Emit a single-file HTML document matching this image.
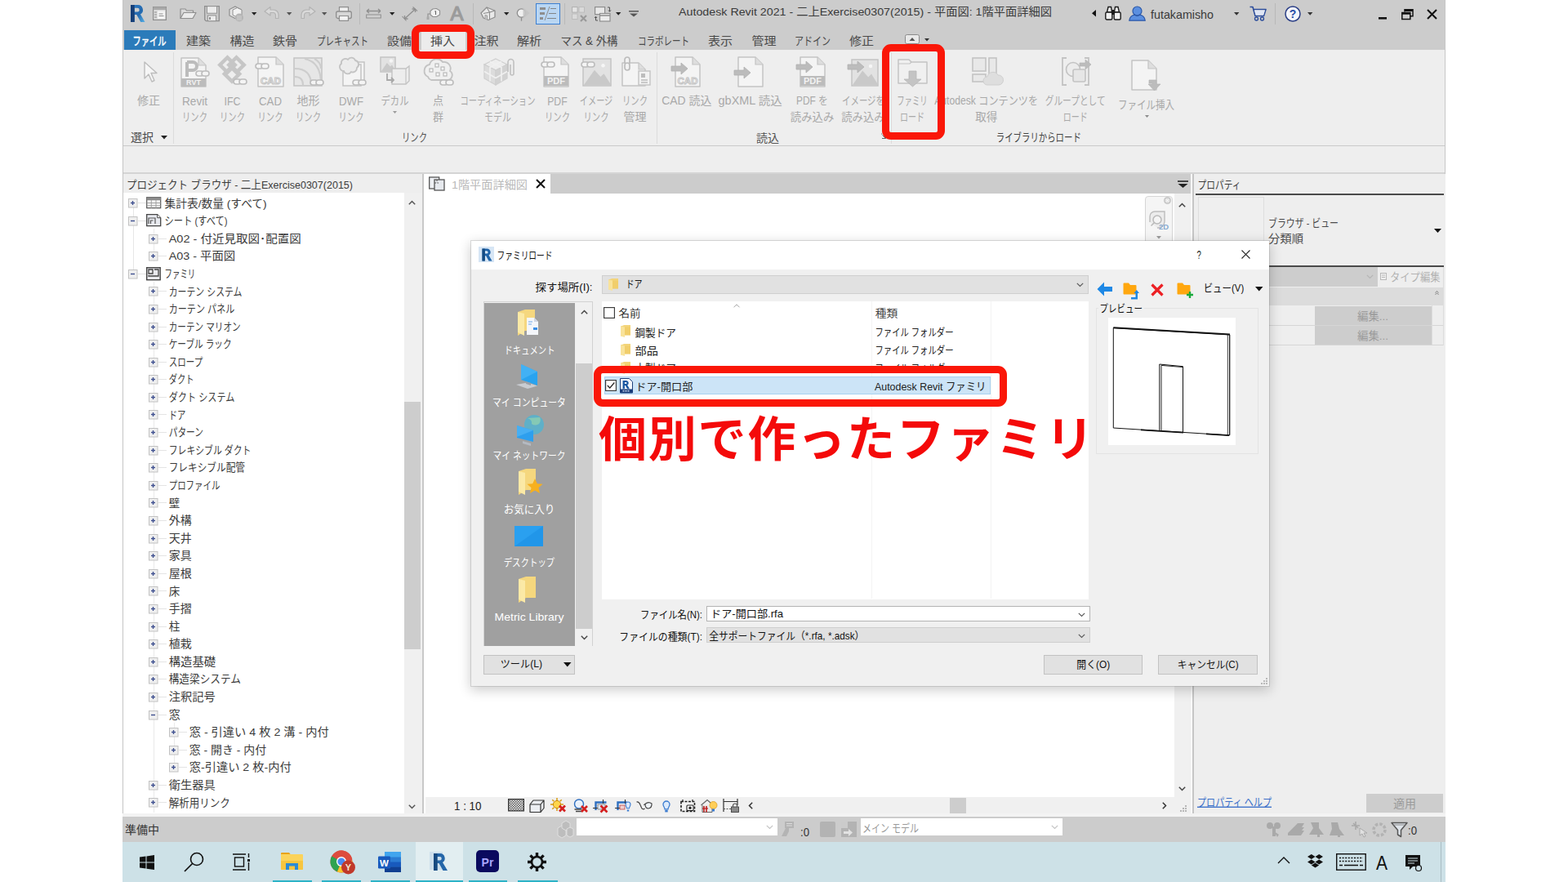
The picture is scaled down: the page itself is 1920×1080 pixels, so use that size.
<!DOCTYPE html>
<html lang="ja"><head><meta charset="utf-8"><title>Autodesk Revit 2021</title>
<style>
html,body{margin:0;padding:0;width:1920px;height:1080px;overflow:hidden;background:#fff;}
body{font-family:"Liberation Sans","Noto Sans CJK JP",sans-serif;font-size:14px;color:#333;position:relative;}
.a{position:absolute;}
.t{position:absolute;white-space:nowrap;line-height:1;will-change:transform;}
.h{position:absolute;white-space:nowrap;line-height:1;color:transparent;overflow:hidden;}
svg{position:absolute;overflow:visible;}
</style></head>
<body>
<div class="a" style="left:150px;top:0px;width:1620px;height:61px;background:#cccccc;"></div>
<div class="a" style="left:150px;top:61px;width:1620px;height:117px;background:#eeeeee;"></div>
<div class="a" style="left:150px;top:178px;width:1620px;height:1px;background:#c9c9c9;"></div>
<div class="a" style="left:150px;top:179px;width:1620px;height:32px;background:#eeeeee;"></div>
<div class="a" style="left:150px;top:211px;width:1620px;height:2px;background:#d4d4d4;"></div>
<div class="a" style="left:150px;top:213px;width:1620px;height:787px;background:#eeeeee;"></div>
<div class="a" style="left:150px;top:0px;width:1px;height:1000px;background:#c4c4c4;"></div>
<div class="a" style="left:1769px;top:0px;width:1px;height:1000px;background:#c6c6c6;"></div>
<svg style="left:0;top:0" width="1" height="1"><text x="831" y="19.1" font-size="13.6" fill="#3a3a3a" textLength="457" lengthAdjust="spacingAndGlyphs">Autodesk Revit 2021 - 二上Exercise0307(2015) - 平面図: 1階平面詳細図</text></svg>
<svg style="left:0;top:0" width="1" height="1"><text x="1409" y="23.4" font-size="14.5" fill="#3a3a3a" textLength="77" lengthAdjust="spacingAndGlyphs">futakamisho</text></svg>
<div class="a" style="left:152px;top:37px;width:63px;height:24px;background:#2b7bba;"></div>
<svg style="left:0;top:0" width="1" height="1"><text x="162.5" y="55.2" font-size="14.1" fill="#ffffff" stroke="#ffffff" stroke-width="0.5" textLength="41" lengthAdjust="spacingAndGlyphs">ファイル</text></svg>
<div class="a" style="left:516px;top:38px;width:54px;height:23px;background:#ececec;"></div>
<svg style="left:0;top:0" width="1" height="1"><text x="228" y="55.3" font-size="14.1" fill="#4a4a4a" textLength="30" lengthAdjust="spacingAndGlyphs">建築</text></svg>
<svg style="left:0;top:0" width="1" height="1"><text x="281.5" y="55.3" font-size="14.1" fill="#4a4a4a" textLength="30" lengthAdjust="spacingAndGlyphs">構造</text></svg>
<svg style="left:0;top:0" width="1" height="1"><text x="334" y="55.3" font-size="14.1" fill="#4a4a4a" textLength="30" lengthAdjust="spacingAndGlyphs">鉄骨</text></svg>
<svg style="left:0;top:0" width="1" height="1"><text x="388" y="55.3" font-size="14.1" fill="#4a4a4a" textLength="63" lengthAdjust="spacingAndGlyphs">プレキャスト</text></svg>
<svg style="left:0;top:0" width="1" height="1"><text x="474" y="55.3" font-size="14.1" fill="#4a4a4a" textLength="30" lengthAdjust="spacingAndGlyphs">設備</text></svg>
<svg style="left:0;top:0" width="1" height="1"><text x="527" y="55.3" font-size="14.1" fill="#4a4a4a" textLength="30" lengthAdjust="spacingAndGlyphs">挿入</text></svg>
<svg style="left:0;top:0" width="1" height="1"><text x="580.5" y="55.3" font-size="14.1" fill="#4a4a4a" textLength="30" lengthAdjust="spacingAndGlyphs">注釈</text></svg>
<svg style="left:0;top:0" width="1" height="1"><text x="633" y="55.3" font-size="14.1" fill="#4a4a4a" textLength="30" lengthAdjust="spacingAndGlyphs">解析</text></svg>
<svg style="left:0;top:0" width="1" height="1"><text x="686.5" y="55.3" font-size="14.1" fill="#4a4a4a" textLength="70" lengthAdjust="spacingAndGlyphs">マス &amp; 外構</text></svg>
<svg style="left:0;top:0" width="1" height="1"><text x="781" y="55.3" font-size="14.1" fill="#4a4a4a" textLength="63" lengthAdjust="spacingAndGlyphs">コラボレート</text></svg>
<svg style="left:0;top:0" width="1" height="1"><text x="867" y="55.3" font-size="14.1" fill="#4a4a4a" textLength="30" lengthAdjust="spacingAndGlyphs">表示</text></svg>
<svg style="left:0;top:0" width="1" height="1"><text x="920.5" y="55.3" font-size="14.1" fill="#4a4a4a" textLength="30" lengthAdjust="spacingAndGlyphs">管理</text></svg>
<svg style="left:0;top:0" width="1" height="1"><text x="973" y="55.3" font-size="14.1" fill="#4a4a4a" textLength="44" lengthAdjust="spacingAndGlyphs">アドイン</text></svg>
<svg style="left:0;top:0" width="1" height="1"><text x="1040" y="55.3" font-size="14.1" fill="#4a4a4a" textLength="30" lengthAdjust="spacingAndGlyphs">修正</text></svg>
<svg style="left:158px;top:5px;" width="20" height="22" viewBox="0 0 20 22"><defs><linearGradient id="rg" x1="0" y1="0" x2="1" y2="1"><stop offset="0" stop-color="#2d7cc7"/><stop offset="0.550" stop-color="#2468ad"/><stop offset="1" stop-color="#56b0e6"/></linearGradient></defs><path d="M2 1 h9 a6.200 6.200 0 0 1 3 11.500 l5.500 9.500 h-5.200 l-5 -9 h-2.600 v9 h-4.700z M6.700 4.800 v4.800 h3.600 a2.400 2.400 0 0 0 0 -4.800z" fill="url(#rg)" fill-rule="evenodd"/><path d="M2 1 h4.700 v21 h-4.700z" fill="#163f78"/></svg>
<svg style="left:187px;top:8px;" width="17" height="17" viewBox="0 0 17 17"><rect x="0.600" y="0.600" width="15.800" height="15.800" fill="#dcdcdc" stroke="#8e8e8e" stroke-width="1.200"/><rect x="0.600" y="0.600" width="15.800" height="3.400" fill="#a9a9a9"/><rect x="6" y="5.500" width="9" height="9.500" fill="#f4f4f4"/><path d="M2 7 h3 M2 10 h3 M2 13 h3 M7.500 9 h5 M7.500 11.500 h6" stroke="#8e8e8e" stroke-width="1.100"/></svg>
<svg style="left:220px;top:9px;" width="21" height="15" viewBox="0 0 21 15"><path d="M1 13.500 v-11.500 h6 l1.500 2 h8 v2.500" fill="#dadada" stroke="#8e8e8e" stroke-width="1.200" stroke-linejoin="round"/><path d="M1 13.500 l4 -7 h15 l-4 7z" fill="#ebebeb" stroke="#8e8e8e" stroke-width="1.200" stroke-linejoin="round"/></svg>
<svg style="left:250px;top:6.5px;" width="19" height="19.5" viewBox="0 0 19 19.5"><path d="M0.700 0.700 h17.600 v18 h-16 l-1.600 -1.600z" fill="#c9c9c9" stroke="#8e8e8e" stroke-width="1.300"/><rect x="3.500" y="0.700" width="12" height="8.500" fill="#ececec" stroke="#8e8e8e" stroke-width="0.900"/><rect x="4.500" y="12" width="10" height="6.700" fill="#ececec" stroke="#8e8e8e" stroke-width="0.900"/><rect x="6" y="14" width="2" height="3" fill="#8e8e8e"/></svg>
<svg style="left:279px;top:6.5px;" width="20" height="20" viewBox="0 0 20 20"><path d="M9 1 l7 3.500 v7.500 l-7 3.500 l-7 -3.500 v-7.500z" fill="#e6e6e6" stroke="#8e8e8e" stroke-width="1.200"/><path d="M6 5 l5.500 -2.500 l5.500 2.500 v6.500 l-5.500 2.500 l-5.500 -2.500z" fill="#f2f2f2" stroke="#8e8e8e" stroke-width="1"/><circle cx="14" cy="14.500" r="5" fill="#b5b5b5"/><path d="M11 13 h6 M11 15 h6 M11 17 h6" stroke="#d8d8d8" stroke-width="0.800"/></svg>
<svg style="left:307.6px;top:15px;" width="6.4" height="3.8" viewBox="0 0 6.4 3.8"><path d="M0 0 h6.400 l-3.200 3.800z" fill="#222"/></svg>
<svg style="left:323px;top:8px;" width="19" height="15" viewBox="0 0 19 15"><path d="M1 6 l7 -5.500 v3.500 h4 a6 6 0 0 1 6 6 v4.500 h-3.500 v-4 a3 3 0 0 0 -3 -3 h-3.500 v3.500z" fill="#d9d9d9" stroke="#b3b3b3" stroke-width="1.200" stroke-linejoin="round"/></svg>
<svg style="left:350.8px;top:15px;" width="6.4" height="3.8" viewBox="0 0 6.4 3.8"><path d="M0 0 h6.400 l-3.200 3.800z" fill="#555"/></svg>
<svg style="left:367.5px;top:8px;" width="19" height="15" viewBox="0 0 19 15"><path d="M18 6 l-7 -5.500 v3.500 h-4 a6 6 0 0 0 -6 6 v4.500 h3.500 v-4 a3 3 0 0 1 3 -3 h3.500 v3.500z" fill="#d9d9d9" stroke="#b3b3b3" stroke-width="1.200" stroke-linejoin="round"/></svg>
<svg style="left:394.3px;top:15px;" width="6.4" height="3.8" viewBox="0 0 6.4 3.8"><path d="M0 0 h6.400 l-3.200 3.800z" fill="#555"/></svg>
<svg style="left:410.5px;top:8px;" width="20" height="18" viewBox="0 0 20 18"><path d="M4.500 6 v-5.300 h11 v5.300" fill="#efefef" stroke="#8e8e8e" stroke-width="1.200"/><rect x="0.700" y="6" width="18.600" height="8.500" rx="2" fill="#d6d6d6" stroke="#8e8e8e" stroke-width="1.300"/><path d="M4.500 11.500 h11 v5.800 h-11z" fill="#f2f2f2" stroke="#8e8e8e" stroke-width="1.200"/></svg>
<div class="a" style="left:439.5px;top:4px;width:1px;height:26px;background:#b9b9b9;"></div>
<svg style="left:447.5px;top:10px;" width="19" height="13" viewBox="0 0 19 13"><path d="M1 3.500 h17 M1 3.500 l3 -2.500 M1 3.500 l3 2.500 M18 3.500 l-3 -2.500 M18 3.500 l-3 2.500" fill="none" stroke="#8e8e8e" stroke-width="1.300"/><rect x="0.700" y="8" width="17.600" height="4" fill="#cfcfcf" stroke="#8e8e8e" stroke-width="1"/></svg>
<svg style="left:476.5px;top:15px;" width="6.4" height="3.8" viewBox="0 0 6.4 3.8"><path d="M0 0 h6.400 l-3.200 3.800z" fill="#222"/></svg>
<svg style="left:491.5px;top:7.5px;" width="20" height="18" viewBox="0 0 20 18"><path d="M3.500 15 l13 -12 M3.500 15 v-4 M3.500 15 h4 M16.500 3 v4 M16.500 3 h-4" fill="none" stroke="#8e8e8e" stroke-width="1.300"/><path d="M0.500 12 l5 5.500 M13.500 0.500 l5.500 5" stroke="#8e8e8e" stroke-width="1.100"/></svg>
<svg style="left:521.5px;top:9.5px;" width="18" height="14.5" viewBox="0 0 18 14.5"><path d="M8 1 l4.500 -0.500 l4 2.500 v5 l-4 2.500 h-4.500 l-3 -2.500 v-4.500z" fill="#f2f2f2" stroke="#8e8e8e" stroke-width="1.100"/><path d="M11.500 3.500 v4.500 M10.500 4.300 l1 -0.800" stroke="#666" stroke-width="1.100" fill="none"/><path d="M5 7 h-3 v4" fill="none" stroke="#8e8e8e" stroke-width="1.100"/><rect x="0.500" y="10.500" width="3" height="3.500" fill="#a9a9a9"/></svg>
<svg style="left:0;top:0" width="1" height="1"><text x="551.5" y="25.1" font-size="23" fill="#9b9b9b" stroke="#9b9b9b" stroke-width="1.2" textLength="16" lengthAdjust="spacingAndGlyphs">A</text></svg>
<div class="a" style="left:579px;top:4px;width:1px;height:26px;background:#b9b9b9;"></div>
<svg style="left:588px;top:8px;" width="19" height="17" viewBox="0 0 19 17"><path d="M1 8 l7 -7 l10 4 v8 l-8 3.500 l-6 -2.500z" fill="#e9e9e9" stroke="#8e8e8e" stroke-width="1.300" stroke-linejoin="round"/><path d="M8 1 l3.500 6 l6.500 -2 M11.500 7 v9 M4 8.500 l7.500 -1.500" fill="none" stroke="#8e8e8e" stroke-width="1.100"/><path d="M6 15 v-4.500 l2.500 0.500 v5" fill="#cfcfcf" stroke="#8e8e8e" stroke-width="0.800"/></svg>
<svg style="left:616.5px;top:15px;" width="6.4" height="3.8" viewBox="0 0 6.4 3.8"><path d="M0 0 h6.400 l-3.200 3.800z" fill="#222"/></svg>
<svg style="left:631.5px;top:7.5px;" width="17" height="18" viewBox="0 0 17 18"><circle cx="6.500" cy="8" r="5.200" fill="#f0f0f0" stroke="#8e8e8e" stroke-width="1.300"/><path d="M8.500 1 l8 7 l-8 7z" fill="#c4c4c4" opacity="0.900"/><path d="M6.500 13.200 v4.500" stroke="#8e8e8e" stroke-width="1.300"/></svg>
<div class="a" style="left:656px;top:3.500px;width:29.500px;height:26px;background:#b9d6f3;border:1px solid #3c7fd1;box-sizing:border-box"></div>
<svg style="left:661px;top:8px;" width="21" height="17" viewBox="0 0 21 17"><path d="M0 2.500 h7 M0 8.500 h6 M0 14.500 h4" stroke="#8e8e8e" stroke-width="3"/><path d="M12 0 l-6 17" stroke="#8e8e8e" stroke-width="1"/><path d="M13 2.500 h7 M11 8.500 h9 M9 14.500 h11" stroke="#7a7a7a" stroke-width="0.900"/></svg>
<div class="a" style="left:691px;top:4px;width:1px;height:26px;background:#b9b9b9;"></div>
<svg style="left:699.5px;top:7.5px;" width="20" height="19" viewBox="0 0 20 19"><rect x="0.600" y="0.600" width="6.500" height="6.500" fill="#e4e4e4" stroke="#b0b0b0"/><rect x="9" y="0.600" width="6.500" height="6.500" fill="#dadada" stroke="#bcbcbc"/><rect x="0.600" y="9" width="6.500" height="6.500" fill="#dadada" stroke="#bcbcbc"/><path d="M11 11 l7 7 M18 11 l-7 7" stroke="#9a9a9a" stroke-width="2.200"/></svg>
<svg style="left:728px;top:7.5px;" width="20" height="18.5" viewBox="0 0 20 18.5"><rect x="0.600" y="0.600" width="12" height="9" fill="#e8e8e8" stroke="#8e8e8e" stroke-width="1.200"/><rect x="6.500" y="8.500" width="12.500" height="9.500" fill="#ececec" stroke="#8e8e8e" stroke-width="1.200"/><path d="M6.500 11 h12.500" stroke="#8e8e8e" stroke-width="1.500"/><path d="M16 1 h2.500 v5 M17 4.500 l1.500 1.800 l1.500 -1.800 M4 17 h-2.500 v-4.500 M0 14 l1.500 -1.800 l1.500 1.800" fill="none" stroke="#555" stroke-width="1"/></svg>
<svg style="left:753.8px;top:15px;" width="6.4" height="3.8" viewBox="0 0 6.4 3.8"><path d="M0 0 h6.400 l-3.200 3.800z" fill="#222"/></svg>
<svg style="left:769.5px;top:12.5px;" width="12" height="7.5" viewBox="0 0 12 7.5"><path d="M0 0.800 h12" stroke="#555" stroke-width="1.500"/><path d="M1 3.500 h10 l-5 4z" fill="#555"/></svg>
<svg style="left:1336.5px;top:12px;" width="5" height="8.5" viewBox="0 0 5 8.5"><path d="M5 0 v8.500 l-5 -4.250z" fill="#111"/></svg>
<svg style="left:1353px;top:7px;" width="20" height="18" viewBox="0 0 20 18"><g fill="#f2f2f2" stroke="#1b1b1b" stroke-width="1.400"><path d="M2.500 8 l1.500 -6.500 h3.500 l1 6.500z M11.500 8 l1 -6.500 h3.500 l1.500 6.500z"/><rect x="0.800" y="8" width="8" height="9" rx="1.500"/><rect x="11.200" y="8" width="8" height="9" rx="1.500"/></g><rect x="8.500" y="5" width="3" height="6" fill="#1b1b1b"/></svg>
<svg style="left:1381.5px;top:6.5px;" width="21" height="19" viewBox="0 0 21 19"><circle cx="10.500" cy="6.500" r="5.500" fill="#5b8fe0" stroke="#2a57a8" stroke-width="1.200"/><path d="M0.800 18.200 q1 -6.500 7 -7 q2.700 2.400 5.400 0 q6 0.500 7 7z" fill="#5b8fe0" stroke="#2a57a8" stroke-width="1.200"/></svg>
<svg style="left:1510.6px;top:14.5px;" width="6.4" height="3.8" viewBox="0 0 6.4 3.8"><path d="M0 0 h6.400 l-3.200 3.800z" fill="#333"/></svg>
<svg style="left:1530px;top:7px;" width="21" height="19" viewBox="0 0 21 19"><path d="M0.500 1.500 h3.500 l3 11 h10.500 l2.500 -8 h-14.500" fill="none" stroke="#2b4c9b" stroke-width="1.600" stroke-linejoin="round"/><path d="M6 5.500 h13 l-1.800 6 h-9.600z" fill="#dfe6f5"/><circle cx="8.500" cy="16" r="2" fill="none" stroke="#2b4c9b" stroke-width="1.300"/><circle cx="15.500" cy="16" r="2" fill="none" stroke="#2b4c9b" stroke-width="1.300"/></svg>
<div class="a" style="left:1561px;top:4px;width:1px;height:26px;background:#b9b9b9;"></div>
<svg style="left:1572.5px;top:6.5px;" width="20" height="20" viewBox="0 0 20 20"><circle cx="10" cy="10" r="9" fill="#f4f6fb" stroke="#2b3f86" stroke-width="1.500"/><text x="10" y="15" font-family="Liberation Sans,sans-serif" font-weight="bold" font-size="14" fill="#2b4fa8" text-anchor="middle">?</text></svg>
<svg style="left:1601.3px;top:14.5px;" width="6.4" height="3.8" viewBox="0 0 6.4 3.8"><path d="M0 0 h6.400 l-3.200 3.800z" fill="#333"/></svg>
<svg style="left:1687.5px;top:20.5px;" width="10" height="3" viewBox="0 0 10 3"><rect x="0" y="0" width="10" height="2.600" fill="#111"/></svg>
<svg style="left:1715.5px;top:10.5px;" width="15" height="13.5" viewBox="0 0 15 13.5"><g fill="none" stroke="#111" stroke-width="1.500"><path d="M4 3.500 v-2.700 h10 v8 h-3"/><path d="M4 1.800 h10" stroke-width="2.400"/><rect x="0.800" y="4.500" width="10" height="8"/><path d="M0.800 5.500 h10" stroke-width="2.400"/></g></svg>
<svg style="left:1746.5px;top:10.5px;" width="13" height="13" viewBox="0 0 13 13"><path d="M1 1 l11 11 M12 1 l-11 11" stroke="#111" stroke-width="2.100"/></svg>
<svg style="left:171px;top:70px;" width="38" height="38" viewBox="0 0 38 38"><path d="M6 6 l0 20 l5 -5 l4 9 l3 -1.500 l-4 -9 l7 0 z" fill="#f6f6f6" stroke="#bdbdbd" stroke-width="1.4" stroke-linejoin="round"/></svg>
<svg style="left:0;top:0" width="1" height="1"><text x="168" y="128.3" font-size="14.1" fill="#a9a9a9" textLength="28" lengthAdjust="spacingAndGlyphs">修正</text></svg>
<svg style="left:221px;top:70px;" width="38" height="38" viewBox="0 0 38 38"><path d="M1 1 h21 l9 9 v26 h-30 z" fill="#f4f4f4" stroke="#c3c3c3" stroke-width="1.5" stroke-linejoin="round"/><path d="M22 1 v9 h9" fill="#dedede" stroke="#c3c3c3" stroke-width="1.2"/><path d="M8 6 v18 M8 6 h7 a5 5 0 0 1 0 10 h-7" fill="none" stroke="#bcbcbc" stroke-width="4"/><rect x="1" y="26" width="30" height="10" fill="#bcbcbc"/><text x="16" y="34.4" font-family="Liberation Sans,sans-serif" font-weight="bold" font-size="9" fill="#f2f2f2" text-anchor="middle">RVT</text><g transform="translate(19,17)"><rect x="0" y="0" width="9" height="6" rx="3" fill="#f4f4f4" stroke="#bcbcbc" stroke-width="1.6"/><rect x="7" y="0" width="9" height="6" rx="3" fill="#f4f4f4" stroke="#bcbcbc" stroke-width="1.6"/></g></svg>
<svg style="left:0;top:0" width="1" height="1"><text x="223" y="128.6" font-size="15" fill="#a9a9a9" textLength="31" lengthAdjust="spacingAndGlyphs">Revit</text></svg>
<svg style="left:0;top:0" width="1" height="1"><text x="223" y="147.8" font-size="14.1" fill="#a9a9a9" textLength="31" lengthAdjust="spacingAndGlyphs">リンク</text></svg>
<svg style="left:266px;top:70px;" width="38" height="38" viewBox="0 0 38 38"><g fill="none" stroke="#c6c6c6" stroke-width="4.5"><rect x="6" y="3" width="13" height="13" transform="rotate(45 12.5 9.5)"/><rect x="17" y="3" width="13" height="13" transform="rotate(45 23.5 9.5)"/><rect x="11.5" y="14" width="13" height="13" transform="rotate(45 18 20.5)"/></g><g transform="translate(20,27)"><rect x="0" y="0" width="9" height="6" rx="3" fill="#f4f4f4" stroke="#bcbcbc" stroke-width="1.6"/><rect x="7" y="0" width="9" height="6" rx="3" fill="#f4f4f4" stroke="#bcbcbc" stroke-width="1.6"/></g></svg>
<svg style="left:0;top:0" width="1" height="1"><text x="274.5" y="128.6" font-size="15" fill="#a9a9a9" textLength="20" lengthAdjust="spacingAndGlyphs">IFC</text></svg>
<svg style="left:0;top:0" width="1" height="1"><text x="269" y="147.8" font-size="14.1" fill="#a9a9a9" textLength="31" lengthAdjust="spacingAndGlyphs">リンク</text></svg>
<svg style="left:313px;top:70px;" width="38" height="38" viewBox="0 0 38 38"><path d="M3 0 h22 l9 9 v27 h-31 z" fill="#f4f4f4" stroke="#c3c3c3" stroke-width="1.5" stroke-linejoin="round"/><path d="M25 0 v9 h9" fill="#dedede" stroke="#c3c3c3" stroke-width="1.2"/><text x="18.5" y="33" font-family="Liberation Sans,sans-serif" font-weight="bold" font-size="11.5" fill="none" stroke="#c3c3c3" stroke-width="1" text-anchor="middle">CAD</text><g transform="translate(0,8)"><rect x="0" y="0" width="9" height="6" rx="3" fill="#f4f4f4" stroke="#bcbcbc" stroke-width="1.6"/><rect x="7" y="0" width="9" height="6" rx="3" fill="#f4f4f4" stroke="#bcbcbc" stroke-width="1.6"/></g></svg>
<svg style="left:0;top:0" width="1" height="1"><text x="317" y="128.6" font-size="15" fill="#a9a9a9" textLength="28" lengthAdjust="spacingAndGlyphs">CAD</text></svg>
<svg style="left:0;top:0" width="1" height="1"><text x="315.5" y="147.8" font-size="14.1" fill="#a9a9a9" textLength="31" lengthAdjust="spacingAndGlyphs">リンク</text></svg>
<svg style="left:359px;top:70px;" width="38" height="38" viewBox="0 0 38 38"><rect x="1" y="1" width="34" height="34" fill="#e6e6e6" stroke="#c3c3c3" stroke-width="1.5"/><g fill="none" stroke="#cdcdcd" stroke-width="2.2"><path d="M2 14 q20 0 20 20"/><path d="M2 24 q10 0 10 10"/><path d="M14 2 q20 4 20 30"/><path d="M26 2 q8 4 8 12"/></g><g transform="translate(21,28)"><rect x="0" y="0" width="9" height="6" rx="3" fill="#f4f4f4" stroke="#bcbcbc" stroke-width="1.6"/><rect x="7" y="0" width="9" height="6" rx="3" fill="#f4f4f4" stroke="#bcbcbc" stroke-width="1.6"/></g></svg>
<svg style="left:0;top:0" width="1" height="1"><text x="363.5" y="128.3" font-size="14.1" fill="#a9a9a9" textLength="28" lengthAdjust="spacingAndGlyphs">地形</text></svg>
<svg style="left:0;top:0" width="1" height="1"><text x="362" y="147.8" font-size="14.1" fill="#a9a9a9" textLength="31" lengthAdjust="spacingAndGlyphs">リンク</text></svg>
<svg style="left:412px;top:70px;" width="38" height="38" viewBox="0 0 38 38"><path d="M12 6 h22 v26 h-22 z" fill="#f4f4f4" stroke="#c3c3c3" stroke-width="1.5"/><path d="M8 9 h22 v26 h-22 z" fill="#f4f4f4" stroke="#c3c3c3" stroke-width="1.5"/><path d="M6 8 a5 5 0 0 1 8 -5 a5 5 0 0 1 9 1 a5 5 0 0 1 2 9 a5 5 0 0 1 -7 5 a5 5 0 0 1 -9 -1 a5 5 0 0 1 -3 -9z" fill="#ececec" stroke="#c3c3c3" stroke-width="1.8"/><g transform="translate(20,28)"><rect x="0" y="0" width="9" height="6" rx="3" fill="#f4f4f4" stroke="#bcbcbc" stroke-width="1.6"/><rect x="7" y="0" width="9" height="6" rx="3" fill="#f4f4f4" stroke="#bcbcbc" stroke-width="1.6"/></g></svg>
<svg style="left:0;top:0" width="1" height="1"><text x="415" y="128.6" font-size="15" fill="#a9a9a9" textLength="30" lengthAdjust="spacingAndGlyphs">DWF</text></svg>
<svg style="left:0;top:0" width="1" height="1"><text x="414.5" y="147.8" font-size="14.1" fill="#a9a9a9" textLength="31" lengthAdjust="spacingAndGlyphs">リンク</text></svg>
<svg style="left:465px;top:70px;" width="38" height="38" viewBox="0 0 38 38"><rect x="1" y="0" width="18" height="18" fill="#e2e2e2" stroke="#c3c3c3" stroke-width="1.5"/><path d="M2 17 l6.84 -9.9 l3.96 4.5 l2.16 -2.16 l4.68 7.56 z" fill="#c9c9c9"/><circle cx="13.96" cy="4.5" r="2.2" fill="#f6f6f6"/><path d="M15 14 h17 l4 -3 v18 l-4 4 h-17 z" fill="#ededed" stroke="#c3c3c3" stroke-width="1.4"/><path d="M32 14 v19" stroke="#c3c3c3" stroke-width="1.2"/><path d="M9 20 v8 h8 m-3 -3 l3 3 l-3 3" fill="none" stroke="#a8a8a8" stroke-width="1.8"/></svg>
<svg style="left:0;top:0" width="1" height="1"><text x="466.5" y="128.3" font-size="14.1" fill="#a9a9a9" textLength="34" lengthAdjust="spacingAndGlyphs">デカル</text></svg>
<svg style="left:518px;top:70px;" width="38" height="38" viewBox="0 0 38 38"><path d="M6 24 a8 8 0 0 1 2 -15 a9 9 0 0 1 16 -3 a8 8 0 0 1 9 11 a6 6 0 0 1 -3 11 h-20 a6 6 0 0 1 -4 -4z" fill="#f0f0f0" stroke="#c3c3c3" stroke-width="1.8"/><g fill="#f8f8f8" stroke="#b9b9b9" stroke-width="1.2"><rect x="8" y="14" width="4" height="4"/><rect x="15" y="8" width="4" height="4"/><rect x="22" y="12" width="4" height="4"/><rect x="16" y="19" width="4" height="4"/><rect x="25" y="19" width="4" height="4"/></g><g transform="translate(21,28)"><rect x="0" y="0" width="9" height="6" rx="3" fill="#f4f4f4" stroke="#bcbcbc" stroke-width="1.6"/><rect x="7" y="0" width="9" height="6" rx="3" fill="#f4f4f4" stroke="#bcbcbc" stroke-width="1.6"/></g></svg>
<svg style="left:0;top:0" width="1" height="1"><text x="530" y="128.3" font-size="14.1" fill="#a9a9a9" textLength="13" lengthAdjust="spacingAndGlyphs">点</text></svg>
<svg style="left:0;top:0" width="1" height="1"><text x="530" y="147.8" font-size="14.1" fill="#a9a9a9" textLength="13" lengthAdjust="spacingAndGlyphs">群</text></svg>
<svg style="left:591px;top:70px;" width="38" height="38" viewBox="0 0 38 38"><g stroke="#cfcfcf" stroke-width="1.2"><path d="M16 2 l14 7 l-14 7 l-14 -7z" fill="#ededed"/><path d="M2 9 v17 l14 8 v-18z" fill="#dcdcdc"/><path d="M30 9 v17 l-14 8 v-18z" fill="#d2d2d2"/><path d="M2 17.500 l14 8 l14 -8 M9 5.500 l14 7 v17 M23 5.500 l-14 7 v17" fill="none" stroke="#f0f0f0" stroke-width="1.6"/></g><path d="M31 18 v-12 a3.500 3.500 0 0 1 7 0 v14 a2 2 0 0 1 -4 0 v-11" fill="none" stroke="#c0c0c0" stroke-width="1.6"/></svg>
<svg style="left:0;top:0" width="1" height="1"><text x="563.5" y="128.3" font-size="14.1" fill="#a9a9a9" textLength="92" lengthAdjust="spacingAndGlyphs">コーディネーション</text></svg>
<svg style="left:0;top:0" width="1" height="1"><text x="593" y="147.8" font-size="14.1" fill="#a9a9a9" textLength="33" lengthAdjust="spacingAndGlyphs">モデル</text></svg>
<svg style="left:663px;top:70px;" width="38" height="38" viewBox="0 0 38 38"><path d="M3 0 h21 l9 9 v27 h-30 z" fill="#f4f4f4" stroke="#c3c3c3" stroke-width="1.5" stroke-linejoin="round"/><path d="M24 0 v9 h9" fill="#dedede" stroke="#c3c3c3" stroke-width="1.2"/><rect x="3" y="23" width="30" height="12" fill="#bcbcbc"/><text x="18" y="33.4" font-family="Liberation Sans,sans-serif" font-weight="bold" font-size="11" fill="#f2f2f2" text-anchor="middle">PDF</text><g transform="translate(0,6)"><rect x="0" y="0" width="9" height="6" rx="3" fill="#f4f4f4" stroke="#bcbcbc" stroke-width="1.6"/><rect x="7" y="0" width="9" height="6" rx="3" fill="#f4f4f4" stroke="#bcbcbc" stroke-width="1.6"/></g></svg>
<svg style="left:0;top:0" width="1" height="1"><text x="670.2" y="128.6" font-size="15" fill="#a9a9a9" textLength="24.5" lengthAdjust="spacingAndGlyphs">PDF</text></svg>
<svg style="left:0;top:0" width="1" height="1"><text x="667" y="147.8" font-size="14.1" fill="#a9a9a9" textLength="31" lengthAdjust="spacingAndGlyphs">リンク</text></svg>
<svg style="left:712px;top:70px;" width="38" height="38" viewBox="0 0 38 38"><rect x="2" y="2" width="34" height="33" fill="#e2e2e2" stroke="#c3c3c3" stroke-width="1.5"/><path d="M3 34 l12.92 -18.15 l7.48 8.25 l4.08 -3.96 l8.84 13.86 z" fill="#c9c9c9"/><circle cx="26.48" cy="10.25" r="2.2" fill="#f6f6f6"/><g transform="translate(0,6)"><rect x="0" y="0" width="9" height="6" rx="3" fill="#f4f4f4" stroke="#bcbcbc" stroke-width="1.6"/><rect x="7" y="0" width="9" height="6" rx="3" fill="#f4f4f4" stroke="#bcbcbc" stroke-width="1.6"/></g></svg>
<svg style="left:0;top:0" width="1" height="1"><text x="709.8" y="128.3" font-size="14.1" fill="#a9a9a9" textLength="40.5" lengthAdjust="spacingAndGlyphs">イメージ</text></svg>
<svg style="left:0;top:0" width="1" height="1"><text x="714.5" y="147.8" font-size="14.1" fill="#a9a9a9" textLength="31" lengthAdjust="spacingAndGlyphs">リンク</text></svg>
<svg style="left:760px;top:70px;" width="38" height="38" viewBox="0 0 38 38"><path d="M2 7 h20 l8 8 v20 h-28 z" fill="#f4f4f4" stroke="#c3c3c3" stroke-width="1.5" stroke-linejoin="round"/><path d="M22 7 v8 h8" fill="#dedede" stroke="#c3c3c3" stroke-width="1.2"/><rect x="22" y="17" width="14" height="17" fill="#f2f2f2" stroke="#c3c3c3" stroke-width="1.4"/><rect x="25" y="20" width="5" height="5" fill="#bcbcbc"/><path d="M25 28 h8 M25 31 h8" stroke="#bcbcbc" stroke-width="1.4"/><rect x="5" y="0" width="6" height="9" rx="3" fill="#f2f2f2" stroke="#bcbcbc" stroke-width="1.7"/><rect x="5" y="7" width="6" height="9" rx="3" fill="#f2f2f2" stroke="#bcbcbc" stroke-width="1.7"/></svg>
<svg style="left:0;top:0" width="1" height="1"><text x="762" y="128.3" font-size="14.1" fill="#a9a9a9" textLength="31" lengthAdjust="spacingAndGlyphs">リンク</text></svg>
<svg style="left:0;top:0" width="1" height="1"><text x="763.5" y="147.8" font-size="14.1" fill="#a9a9a9" textLength="28" lengthAdjust="spacingAndGlyphs">管理</text></svg>
<svg style="left:822px;top:70px;" width="38" height="38" viewBox="0 0 38 38"><path d="M5 0 h21 l9 9 v27 h-30 z" fill="#f4f4f4" stroke="#c3c3c3" stroke-width="1.5" stroke-linejoin="round"/><path d="M26 0 v9 h9" fill="#dedede" stroke="#c3c3c3" stroke-width="1.2"/><text x="20" y="33" font-family="Liberation Sans,sans-serif" font-weight="bold" font-size="11.5" fill="none" stroke="#c3c3c3" stroke-width="1" text-anchor="middle">CAD</text><path d="M0 11 h12 v-4 l8 7 l-8 7 v-4 h-12 z" fill="#bcbcbc" stroke="#b0b0b0" stroke-width="0.8"/></svg>
<svg style="left:0;top:0" width="1" height="1"><text x="810.3" y="128.3" font-size="14.1" fill="#a9a9a9" textLength="61" lengthAdjust="spacingAndGlyphs">CAD 読込</text></svg>
<svg style="left:899px;top:70px;" width="38" height="38" viewBox="0 0 38 38"><path d="M5 0 h21 l9 9 v27 h-30 z" fill="#f4f4f4" stroke="#c3c3c3" stroke-width="1.5" stroke-linejoin="round"/><path d="M26 0 v9 h9" fill="#dedede" stroke="#c3c3c3" stroke-width="1.2"/><path d="M0 16 h12 v-4 l8 7 l-8 7 v-4 h-12 z" fill="#bcbcbc" stroke="#b0b0b0" stroke-width="0.8"/></svg>
<svg style="left:0;top:0" width="1" height="1"><text x="879.6" y="128.3" font-size="14.1" fill="#a9a9a9" textLength="78" lengthAdjust="spacingAndGlyphs">gbXML 読込</text></svg>
<svg style="left:975px;top:70px;" width="38" height="38" viewBox="0 0 38 38"><path d="M5 0 h21 l9 9 v27 h-30 z" fill="#f4f4f4" stroke="#c3c3c3" stroke-width="1.5" stroke-linejoin="round"/><path d="M26 0 v9 h9" fill="#dedede" stroke="#c3c3c3" stroke-width="1.2"/><rect x="5" y="23" width="30" height="12" fill="#bcbcbc"/><text x="20" y="33.4" font-family="Liberation Sans,sans-serif" font-weight="bold" font-size="11" fill="#f2f2f2" text-anchor="middle">PDF</text><path d="M0 9 h12 v-4 l8 7 l-8 7 v-4 h-12 z" fill="#bcbcbc" stroke="#b0b0b0" stroke-width="0.8"/></svg>
<svg style="left:0;top:0" width="1" height="1"><text x="975" y="128.3" font-size="14.1" fill="#a9a9a9" textLength="39" lengthAdjust="spacingAndGlyphs">PDF を</text></svg>
<svg style="left:0;top:0" width="1" height="1"><text x="967.8" y="147.8" font-size="14.1" fill="#a9a9a9" textLength="53.5" lengthAdjust="spacingAndGlyphs">読み込み</text></svg>
<svg style="left:1038px;top:70px;" width="38" height="38" viewBox="0 0 38 38"><rect x="5" y="3" width="32" height="32" fill="#e2e2e2" stroke="#c3c3c3" stroke-width="1.5"/><path d="M6 34 l12.16 -17.6 l7.04 8 l3.84 -3.84 l8.32 13.44 z" fill="#c9c9c9"/><circle cx="28.04" cy="11" r="2.2" fill="#f6f6f6"/><path d="M0 9 h12 v-4 l8 7 l-8 7 v-4 h-12 z" fill="#bcbcbc" stroke="#b0b0b0" stroke-width="0.8"/></svg>
<svg style="left:0;top:0" width="1" height="1"><text x="1031" y="128.3" font-size="14.1" fill="#a9a9a9" textLength="52" lengthAdjust="spacingAndGlyphs">イメージを</text></svg>
<svg style="left:0;top:0" width="1" height="1"><text x="1030.2" y="147.8" font-size="14.1" fill="#a9a9a9" textLength="53.5" lengthAdjust="spacingAndGlyphs">読み込み</text></svg>
<svg style="left:1098.5px;top:70px;" width="38" height="38" viewBox="0 0 38 38"><path d="M1 3 h13 l3 3 h19 v26 h-35 z" fill="#f0f0f0" stroke="#c3c3c3" stroke-width="1.5" stroke-linejoin="round"/><path d="M1 8 h14 l2 -2" fill="none" stroke="#c3c3c3" stroke-width="1.2"/><path d="M14 17 h9 v10 h6 l-10.500 9 l-10.500 -9 h6 z" fill="#c4c4c4" stroke="#b6b6b6" stroke-width="0.8"/></svg>
<svg style="left:0;top:0" width="1" height="1"><text x="1098.2" y="128.3" font-size="14.1" fill="#a9a9a9" textLength="37.5" lengthAdjust="spacingAndGlyphs">ファミリ</text></svg>
<svg style="left:0;top:0" width="1" height="1"><text x="1102" y="147.8" font-size="14.1" fill="#a9a9a9" textLength="30" lengthAdjust="spacingAndGlyphs">ロード</text></svg>
<svg style="left:1190px;top:70px;" width="38" height="38" viewBox="0 0 38 38"><rect x="1" y="1" width="16" height="16" fill="#e8e8e8" stroke="#c3c3c3" stroke-width="1.6"/><rect x="21" y="1" width="9" height="26" fill="#e8e8e8" stroke="#c3c3c3" stroke-width="1.6"/><rect x="1" y="21" width="16" height="9" fill="#e8e8e8" stroke="#c3c3c3" stroke-width="1.6"/><path d="M19 34 a5 5 0 0 1 0 -10 a7 7 0 0 1 13 -2 a6 6 0 0 1 1 12 z" fill="#dedede" stroke="#cfcfcf" stroke-width="1"/></svg>
<svg style="left:0;top:0" width="1" height="1"><text x="1144.2" y="128.3" font-size="14.1" fill="#a9a9a9" textLength="127" lengthAdjust="spacingAndGlyphs">Autodesk コンテンツを</text></svg>
<svg style="left:0;top:0" width="1" height="1"><text x="1194.2" y="147.8" font-size="14.1" fill="#a9a9a9" textLength="27" lengthAdjust="spacingAndGlyphs">取得</text></svg>
<svg style="left:1299px;top:70px;" width="38" height="38" viewBox="0 0 38 38"><path d="M7 1 h-5 v33 h5 M29 1 h5 v33 h-5" fill="none" stroke="#c3c3c3" stroke-width="1.8"/><circle cx="15" cy="15" r="8.500" fill="#ececec" stroke="#c3c3c3" stroke-width="1.6"/><rect x="15" y="15" width="15" height="15" rx="2" fill="#e6e6e6" stroke="#c3c3c3" stroke-width="1.6"/><path d="M23 7 h7 v-4 l7 6 l-7 6 v-4 h-7z" fill="#bcbcbc" stroke="#b4b4b4" stroke-width="0.7"/></svg>
<svg style="left:0;top:0" width="1" height="1"><text x="1279.7" y="128.3" font-size="14.1" fill="#a9a9a9" textLength="74" lengthAdjust="spacingAndGlyphs">グループとして</text></svg>
<svg style="left:0;top:0" width="1" height="1"><text x="1301.7" y="147.8" font-size="14.1" fill="#a9a9a9" textLength="30" lengthAdjust="spacingAndGlyphs">ロード</text></svg>
<svg style="left:1385px;top:74px;" width="38" height="38" viewBox="0 0 38 38"><path d="M1 0 h20 l10 10 v26 h-30 z" fill="#f4f4f4" stroke="#c3c3c3" stroke-width="1.5" stroke-linejoin="round"/><path d="M21 0 v10 h10" fill="#dedede" stroke="#c3c3c3" stroke-width="1.2"/><path d="M22 24 h9 v5 h5 l-7.500 8 l-7.500 -8 h5 v-1 h-4z" fill="#bcbcbc" stroke="#b4b4b4" stroke-width="0.7"/></svg>
<svg style="left:0;top:0" width="1" height="1"><text x="1369" y="132.8" font-size="14.1" fill="#a9a9a9" textLength="69" lengthAdjust="spacingAndGlyphs">ファイル挿入</text></svg>
<svg style="left:481px;top:136px;" width="5" height="3" viewBox="0 0 5 3"><path d="M0 0 h5 l-2.5 3 z" fill="#9a9a9a"/></svg>
<svg style="left:1402px;top:140.5px;" width="5" height="3" viewBox="0 0 5 3"><path d="M0 0 h5 l-2.5 3 z" fill="#8a8a8a"/></svg>
<div class="a" style="left:212px;top:64px;width:1px;height:112px;background:#dcdcdc;"></div>
<div class="a" style="left:804px;top:64px;width:1px;height:112px;background:#dcdcdc;"></div>
<div class="a" style="left:1091px;top:64px;width:1px;height:112px;background:#dcdcdc;"></div>
<svg style="left:0;top:0" width="1" height="1"><text x="160" y="173.2" font-size="14.1" fill="#4a4a4a" textLength="28" lengthAdjust="spacingAndGlyphs">選択</text></svg>
<svg style="left:196.5px;top:165.75px;" width="8" height="4.5" viewBox="0 0 8 4.5"><path d="M0 0 h8 l-4 4.5 z" fill="#222"/></svg>
<svg style="left:0;top:0" width="1" height="1"><text x="492" y="173.3" font-size="14.1" fill="#555" textLength="31" lengthAdjust="spacingAndGlyphs">リンク</text></svg>
<svg style="left:0;top:0" width="1" height="1"><text x="926" y="173.7" font-size="14.1" fill="#555" textLength="28" lengthAdjust="spacingAndGlyphs">読込</text></svg>
<svg style="left:0;top:0" width="1" height="1"><text x="1219.8" y="173.3" font-size="14.1" fill="#444" textLength="104" lengthAdjust="spacingAndGlyphs">ライブラリからロード</text></svg>
<svg style="left:1079px;top:164px;" width="6" height="6" viewBox="0 0 6 6"><path d="M0 0 h1 M5.500 1 v4.500 h-4.500 M1.500 1.500 l4 4" fill="none" stroke="#666" stroke-width="1"/></svg>
<svg style="left:1108px;top:42px;" width="18" height="12" viewBox="0 0 18 12"><rect x="0.500" y="0.500" width="17" height="11" rx="2" fill="#e9e9e9" stroke="#8a8a8a"/><path d="M5.500 8 l3.500 -4 l3.500 4z" fill="#555"/></svg>
<svg style="left:1132px;top:46.75px;" width="6" height="3.5" viewBox="0 0 6 3.5"><path d="M0 0 h6 l-3 3.5 z" fill="#333"/></svg>
<svg style="left:0;top:0" width="1" height="1"><text x="155" y="230.9" font-size="13.6" fill="#3c3c3c" textLength="277" lengthAdjust="spacingAndGlyphs">プロジェクト ブラウザ - 二上Exercise0307(2015)</text></svg>
<div class="a" style="left:151px;top:236px;width:344px;height:762px;background:#ffffff;"></div>
<div class="a" style="left:495px;top:236px;width:22px;height:762px;background:#f0f0f0;"></div>
<div class="a" style="left:495px;top:492px;width:19.5px;height:303px;background:#cdcdcd;"></div>
<div class="a" style="left:516.7px;top:213px;width:2px;height:786px;background:#c8c8c8;"></div>
<svg style="left:500px;top:245px;" width="9" height="6" viewBox="0 0 9 6"><path d="M0.800 5.200 l3.700 -3.700 l3.700 3.700" fill="none" stroke="#555" stroke-width="1.5"/></svg>
<svg style="left:500px;top:985px;" width="9" height="6" viewBox="0 0 9 6"><path d="M0.800 0.800 l3.700 3.700 l3.700 -3.700" fill="none" stroke="#555" stroke-width="1.5"/></svg>
<div class="a" style="left:163px;top:254px;width:1px;height:85px;background:#e6e6e6;"></div>
<div class="a" style="left:188px;top:280px;width:1px;height:40px;background:#e9e9e9;"></div>
<div class="a" style="left:188px;top:345px;width:1px;height:650px;background:#e9e9e9;"></div>
<div class="a" style="left:213px;top:885px;width:1px;height:60px;background:#e9e9e9;"></div>
<div class="a" style="left:169px;top:248px;width:10px;height:1px;background:#e4e4e4;"></div>
<svg style="left:157px;top:242.5px;" width="11.5" height="11.5" viewBox="0 0 11.5 11.5"><rect x="0.500" y="0.500" width="10.500" height="10.500" fill="#efefef" stroke="#c2c2c2"/><path d="M3 5.500 h5" stroke="#3d4f8f" stroke-width="1.400"/><path d="M5.500 3 v5" stroke="#3d4f8f" stroke-width="1.400"/></svg>
<svg style="left:178.5px;top:240.9px;" width="18" height="16" viewBox="0 0 18 16"><rect x="0.700" y="0.700" width="17" height="13" fill="#f4f4f4" stroke="#555" stroke-width="1.2"/><rect x="0.700" y="0.700" width="17" height="3.500" fill="#8a8a8a"/><path d="M0.700 7.500 h17 M0.700 10.800 h17 M6.300 4 v10 M12 4 v10" stroke="#9a9a9a" stroke-width="0.9"/></svg>
<svg style="left:0;top:0" width="1" height="1"><text x="201.6" y="253.5" font-size="13.6" fill="#3a3a3a" textLength="125" lengthAdjust="spacingAndGlyphs">集計表/数量 (すべて)</text></svg>
<div class="a" style="left:169px;top:270px;width:10px;height:1px;background:#e4e4e4;"></div>
<svg style="left:157px;top:264.5px;" width="11.5" height="11.5" viewBox="0 0 11.5 11.5"><rect x="0.500" y="0.500" width="10.500" height="10.500" fill="#efefef" stroke="#c2c2c2"/><path d="M3 5.500 h5" stroke="#3d4f8f" stroke-width="1.400"/></svg>
<svg style="left:178.5px;top:262.49px;" width="18" height="16" viewBox="0 0 18 16"><path d="M0.700 0.700 h13 l4 4 v10 h-17 z" fill="#e8eaf0" stroke="#444" stroke-width="1.300"/><path d="M13.700 0.700 v4 h4" fill="#fff" stroke="#444" stroke-width="1"/><path d="M3 12 v-7 h8 v7 M5.500 12 v-4 h3" fill="none" stroke="#555" stroke-width="1.200"/></svg>
<svg style="left:0;top:0" width="1" height="1"><text x="201.6" y="275.1" font-size="13.6" fill="#3a3a3a" textLength="77" lengthAdjust="spacingAndGlyphs">シート (すべて)</text></svg>
<div class="a" style="left:194px;top:292px;width:9.7px;height:1px;background:#e4e4e4;"></div>
<svg style="left:182px;top:286.5px;" width="11.5" height="11.5" viewBox="0 0 11.5 11.5"><rect x="0.500" y="0.500" width="10.500" height="10.500" fill="#efefef" stroke="#c2c2c2"/><path d="M3 5.500 h5" stroke="#3d4f8f" stroke-width="1.400"/><path d="M5.500 3 v5" stroke="#3d4f8f" stroke-width="1.400"/></svg>
<svg style="left:0;top:0" width="1" height="1"><text x="206.7" y="296.7" font-size="13.6" fill="#3a3a3a" textLength="162" lengthAdjust="spacingAndGlyphs">A02 - 付近見取図･配置図</text></svg>
<div class="a" style="left:194px;top:313px;width:9.7px;height:1px;background:#e4e4e4;"></div>
<svg style="left:182px;top:307.5px;" width="11.5" height="11.5" viewBox="0 0 11.5 11.5"><rect x="0.500" y="0.500" width="10.500" height="10.500" fill="#efefef" stroke="#c2c2c2"/><path d="M3 5.500 h5" stroke="#3d4f8f" stroke-width="1.400"/><path d="M5.500 3 v5" stroke="#3d4f8f" stroke-width="1.400"/></svg>
<svg style="left:0;top:0" width="1" height="1"><text x="206.7" y="318.3" font-size="13.6" fill="#3a3a3a" textLength="81.5" lengthAdjust="spacingAndGlyphs">A03 - 平面図</text></svg>
<div class="a" style="left:169px;top:335px;width:10px;height:1px;background:#e4e4e4;"></div>
<svg style="left:157px;top:329.5px;" width="11.5" height="11.5" viewBox="0 0 11.5 11.5"><rect x="0.500" y="0.500" width="10.500" height="10.500" fill="#efefef" stroke="#c2c2c2"/><path d="M3 5.500 h5" stroke="#3d4f8f" stroke-width="1.400"/></svg>
<svg style="left:178.5px;top:327.26px;" width="18" height="16" viewBox="0 0 18 16"><rect x="0.700" y="0.700" width="16.500" height="15" fill="#e9e9ee" stroke="#444" stroke-width="1.400"/><path d="M3 3 h5 v5 h-5 z M10 3 h5 v8 h-12 v-1" fill="none" stroke="#444" stroke-width="1.300"/></svg>
<svg style="left:0;top:0" width="1" height="1"><text x="201.6" y="339.9" font-size="13.6" fill="#3a3a3a" textLength="37.6" lengthAdjust="spacingAndGlyphs">ファミリ</text></svg>
<div class="a" style="left:194px;top:356px;width:9.7px;height:1px;background:#e4e4e4;"></div>
<svg style="left:182px;top:350.5px;" width="11.5" height="11.5" viewBox="0 0 11.5 11.5"><rect x="0.500" y="0.500" width="10.500" height="10.500" fill="#efefef" stroke="#c2c2c2"/><path d="M3 5.500 h5" stroke="#3d4f8f" stroke-width="1.400"/><path d="M5.500 3 v5" stroke="#3d4f8f" stroke-width="1.400"/></svg>
<svg style="left:0;top:0" width="1" height="1"><text x="206.7" y="361.5" font-size="13.6" fill="#3a3a3a" textLength="89.8" lengthAdjust="spacingAndGlyphs">カーテン システム</text></svg>
<div class="a" style="left:194px;top:378px;width:9.7px;height:1px;background:#e4e4e4;"></div>
<svg style="left:182px;top:372.5px;" width="11.5" height="11.5" viewBox="0 0 11.5 11.5"><rect x="0.500" y="0.500" width="10.500" height="10.500" fill="#efefef" stroke="#c2c2c2"/><path d="M3 5.500 h5" stroke="#3d4f8f" stroke-width="1.400"/><path d="M5.500 3 v5" stroke="#3d4f8f" stroke-width="1.400"/></svg>
<svg style="left:0;top:0" width="1" height="1"><text x="206.7" y="383.1" font-size="13.6" fill="#3a3a3a" textLength="80.6" lengthAdjust="spacingAndGlyphs">カーテン パネル</text></svg>
<div class="a" style="left:194px;top:400px;width:9.7px;height:1px;background:#e4e4e4;"></div>
<svg style="left:182px;top:394.5px;" width="11.5" height="11.5" viewBox="0 0 11.5 11.5"><rect x="0.500" y="0.500" width="10.500" height="10.500" fill="#efefef" stroke="#c2c2c2"/><path d="M3 5.500 h5" stroke="#3d4f8f" stroke-width="1.400"/><path d="M5.500 3 v5" stroke="#3d4f8f" stroke-width="1.400"/></svg>
<svg style="left:0;top:0" width="1" height="1"><text x="206.7" y="404.6" font-size="13.6" fill="#3a3a3a" textLength="88" lengthAdjust="spacingAndGlyphs">カーテン マリオン</text></svg>
<div class="a" style="left:194px;top:421px;width:9.7px;height:1px;background:#e4e4e4;"></div>
<svg style="left:182px;top:415.5px;" width="11.5" height="11.5" viewBox="0 0 11.5 11.5"><rect x="0.500" y="0.500" width="10.500" height="10.500" fill="#efefef" stroke="#c2c2c2"/><path d="M3 5.500 h5" stroke="#3d4f8f" stroke-width="1.400"/><path d="M5.500 3 v5" stroke="#3d4f8f" stroke-width="1.400"/></svg>
<svg style="left:0;top:0" width="1" height="1"><text x="206.7" y="426.2" font-size="13.6" fill="#3a3a3a" textLength="77" lengthAdjust="spacingAndGlyphs">ケーブル ラック</text></svg>
<div class="a" style="left:194px;top:443px;width:9.7px;height:1px;background:#e4e4e4;"></div>
<svg style="left:182px;top:437.5px;" width="11.5" height="11.5" viewBox="0 0 11.5 11.5"><rect x="0.500" y="0.500" width="10.500" height="10.500" fill="#efefef" stroke="#c2c2c2"/><path d="M3 5.500 h5" stroke="#3d4f8f" stroke-width="1.400"/><path d="M5.500 3 v5" stroke="#3d4f8f" stroke-width="1.400"/></svg>
<svg style="left:0;top:0" width="1" height="1"><text x="206.7" y="447.8" font-size="13.6" fill="#3a3a3a" textLength="41.5" lengthAdjust="spacingAndGlyphs">スロープ</text></svg>
<div class="a" style="left:194px;top:464px;width:9.7px;height:1px;background:#e4e4e4;"></div>
<svg style="left:182px;top:458.5px;" width="11.5" height="11.5" viewBox="0 0 11.5 11.5"><rect x="0.500" y="0.500" width="10.500" height="10.500" fill="#efefef" stroke="#c2c2c2"/><path d="M3 5.500 h5" stroke="#3d4f8f" stroke-width="1.400"/><path d="M5.500 3 v5" stroke="#3d4f8f" stroke-width="1.400"/></svg>
<svg style="left:0;top:0" width="1" height="1"><text x="206.7" y="469.4" font-size="13.6" fill="#3a3a3a" textLength="31" lengthAdjust="spacingAndGlyphs">ダクト</text></svg>
<div class="a" style="left:194px;top:486px;width:9.7px;height:1px;background:#e4e4e4;"></div>
<svg style="left:182px;top:480.5px;" width="11.5" height="11.5" viewBox="0 0 11.5 11.5"><rect x="0.500" y="0.500" width="10.500" height="10.500" fill="#efefef" stroke="#c2c2c2"/><path d="M3 5.500 h5" stroke="#3d4f8f" stroke-width="1.400"/><path d="M5.500 3 v5" stroke="#3d4f8f" stroke-width="1.400"/></svg>
<svg style="left:0;top:0" width="1" height="1"><text x="206.7" y="491" font-size="13.6" fill="#3a3a3a" textLength="80.6" lengthAdjust="spacingAndGlyphs">ダクト システム</text></svg>
<div class="a" style="left:194px;top:507px;width:9.7px;height:1px;background:#e4e4e4;"></div>
<svg style="left:182px;top:501.5px;" width="11.5" height="11.5" viewBox="0 0 11.5 11.5"><rect x="0.500" y="0.500" width="10.500" height="10.500" fill="#efefef" stroke="#c2c2c2"/><path d="M3 5.500 h5" stroke="#3d4f8f" stroke-width="1.400"/><path d="M5.500 3 v5" stroke="#3d4f8f" stroke-width="1.400"/></svg>
<svg style="left:0;top:0" width="1" height="1"><text x="206.7" y="512.6" font-size="13.6" fill="#3a3a3a" textLength="20.7" lengthAdjust="spacingAndGlyphs">ドア</text></svg>
<div class="a" style="left:194px;top:529px;width:9.7px;height:1px;background:#e4e4e4;"></div>
<svg style="left:182px;top:523.5px;" width="11.5" height="11.5" viewBox="0 0 11.5 11.5"><rect x="0.500" y="0.500" width="10.500" height="10.500" fill="#efefef" stroke="#c2c2c2"/><path d="M3 5.500 h5" stroke="#3d4f8f" stroke-width="1.400"/><path d="M5.500 3 v5" stroke="#3d4f8f" stroke-width="1.400"/></svg>
<svg style="left:0;top:0" width="1" height="1"><text x="206.7" y="534.2" font-size="13.6" fill="#3a3a3a" textLength="42.3" lengthAdjust="spacingAndGlyphs">パターン</text></svg>
<div class="a" style="left:194px;top:551px;width:9.7px;height:1px;background:#e4e4e4;"></div>
<svg style="left:182px;top:545.5px;" width="11.5" height="11.5" viewBox="0 0 11.5 11.5"><rect x="0.500" y="0.500" width="10.500" height="10.500" fill="#efefef" stroke="#c2c2c2"/><path d="M3 5.500 h5" stroke="#3d4f8f" stroke-width="1.400"/><path d="M5.500 3 v5" stroke="#3d4f8f" stroke-width="1.400"/></svg>
<svg style="left:0;top:0" width="1" height="1"><text x="206.7" y="555.8" font-size="13.6" fill="#3a3a3a" textLength="100.7" lengthAdjust="spacingAndGlyphs">フレキシブル ダクト</text></svg>
<div class="a" style="left:194px;top:572px;width:9.7px;height:1px;background:#e4e4e4;"></div>
<svg style="left:182px;top:566.5px;" width="11.5" height="11.5" viewBox="0 0 11.5 11.5"><rect x="0.500" y="0.500" width="10.500" height="10.500" fill="#efefef" stroke="#c2c2c2"/><path d="M3 5.500 h5" stroke="#3d4f8f" stroke-width="1.400"/><path d="M5.500 3 v5" stroke="#3d4f8f" stroke-width="1.400"/></svg>
<svg style="left:0;top:0" width="1" height="1"><text x="206.7" y="577.4" font-size="13.6" fill="#3a3a3a" textLength="93.3" lengthAdjust="spacingAndGlyphs">フレキシブル配管</text></svg>
<div class="a" style="left:194px;top:594px;width:9.7px;height:1px;background:#e4e4e4;"></div>
<svg style="left:182px;top:588.5px;" width="11.5" height="11.5" viewBox="0 0 11.5 11.5"><rect x="0.500" y="0.500" width="10.500" height="10.500" fill="#efefef" stroke="#c2c2c2"/><path d="M3 5.500 h5" stroke="#3d4f8f" stroke-width="1.400"/><path d="M5.500 3 v5" stroke="#3d4f8f" stroke-width="1.400"/></svg>
<svg style="left:0;top:0" width="1" height="1"><text x="206.7" y="599" font-size="13.6" fill="#3a3a3a" textLength="62.8" lengthAdjust="spacingAndGlyphs">プロファイル</text></svg>
<div class="a" style="left:194px;top:615px;width:9.7px;height:1px;background:#e4e4e4;"></div>
<svg style="left:182px;top:609.5px;" width="11.5" height="11.5" viewBox="0 0 11.5 11.5"><rect x="0.500" y="0.500" width="10.500" height="10.500" fill="#efefef" stroke="#c2c2c2"/><path d="M3 5.500 h5" stroke="#3d4f8f" stroke-width="1.400"/><path d="M5.500 3 v5" stroke="#3d4f8f" stroke-width="1.400"/></svg>
<svg style="left:0;top:0" width="1" height="1"><text x="206.7" y="620.5" font-size="13.6" fill="#3a3a3a" textLength="13.5" lengthAdjust="spacingAndGlyphs">壁</text></svg>
<div class="a" style="left:194px;top:637px;width:9.7px;height:1px;background:#e4e4e4;"></div>
<svg style="left:182px;top:631.5px;" width="11.5" height="11.5" viewBox="0 0 11.5 11.5"><rect x="0.500" y="0.500" width="10.500" height="10.500" fill="#efefef" stroke="#c2c2c2"/><path d="M3 5.500 h5" stroke="#3d4f8f" stroke-width="1.400"/><path d="M5.500 3 v5" stroke="#3d4f8f" stroke-width="1.400"/></svg>
<svg style="left:0;top:0" width="1" height="1"><text x="206.7" y="642.1" font-size="13.6" fill="#3a3a3a" textLength="28" lengthAdjust="spacingAndGlyphs">外構</text></svg>
<div class="a" style="left:194px;top:659px;width:9.7px;height:1px;background:#e4e4e4;"></div>
<svg style="left:182px;top:653.5px;" width="11.5" height="11.5" viewBox="0 0 11.5 11.5"><rect x="0.500" y="0.500" width="10.500" height="10.500" fill="#efefef" stroke="#c2c2c2"/><path d="M3 5.500 h5" stroke="#3d4f8f" stroke-width="1.400"/><path d="M5.500 3 v5" stroke="#3d4f8f" stroke-width="1.400"/></svg>
<svg style="left:0;top:0" width="1" height="1"><text x="206.7" y="663.7" font-size="13.6" fill="#3a3a3a" textLength="28" lengthAdjust="spacingAndGlyphs">天井</text></svg>
<div class="a" style="left:194px;top:680px;width:9.7px;height:1px;background:#e4e4e4;"></div>
<svg style="left:182px;top:674.5px;" width="11.5" height="11.5" viewBox="0 0 11.5 11.5"><rect x="0.500" y="0.500" width="10.500" height="10.500" fill="#efefef" stroke="#c2c2c2"/><path d="M3 5.500 h5" stroke="#3d4f8f" stroke-width="1.400"/><path d="M5.500 3 v5" stroke="#3d4f8f" stroke-width="1.400"/></svg>
<svg style="left:0;top:0" width="1" height="1"><text x="206.7" y="685.3" font-size="13.6" fill="#3a3a3a" textLength="28" lengthAdjust="spacingAndGlyphs">家具</text></svg>
<div class="a" style="left:194px;top:702px;width:9.7px;height:1px;background:#e4e4e4;"></div>
<svg style="left:182px;top:696.5px;" width="11.5" height="11.5" viewBox="0 0 11.5 11.5"><rect x="0.500" y="0.500" width="10.500" height="10.500" fill="#efefef" stroke="#c2c2c2"/><path d="M3 5.500 h5" stroke="#3d4f8f" stroke-width="1.400"/><path d="M5.500 3 v5" stroke="#3d4f8f" stroke-width="1.400"/></svg>
<svg style="left:0;top:0" width="1" height="1"><text x="206.7" y="706.9" font-size="13.6" fill="#3a3a3a" textLength="28" lengthAdjust="spacingAndGlyphs">屋根</text></svg>
<div class="a" style="left:194px;top:723px;width:9.7px;height:1px;background:#e4e4e4;"></div>
<svg style="left:182px;top:717.5px;" width="11.5" height="11.5" viewBox="0 0 11.5 11.5"><rect x="0.500" y="0.500" width="10.500" height="10.500" fill="#efefef" stroke="#c2c2c2"/><path d="M3 5.500 h5" stroke="#3d4f8f" stroke-width="1.400"/><path d="M5.500 3 v5" stroke="#3d4f8f" stroke-width="1.400"/></svg>
<svg style="left:0;top:0" width="1" height="1"><text x="206.7" y="728.5" font-size="13.6" fill="#3a3a3a" textLength="13.5" lengthAdjust="spacingAndGlyphs">床</text></svg>
<div class="a" style="left:194px;top:745px;width:9.7px;height:1px;background:#e4e4e4;"></div>
<svg style="left:182px;top:739.5px;" width="11.5" height="11.5" viewBox="0 0 11.5 11.5"><rect x="0.500" y="0.500" width="10.500" height="10.500" fill="#efefef" stroke="#c2c2c2"/><path d="M3 5.500 h5" stroke="#3d4f8f" stroke-width="1.400"/><path d="M5.500 3 v5" stroke="#3d4f8f" stroke-width="1.400"/></svg>
<svg style="left:0;top:0" width="1" height="1"><text x="206.7" y="750.1" font-size="13.6" fill="#3a3a3a" textLength="28" lengthAdjust="spacingAndGlyphs">手摺</text></svg>
<div class="a" style="left:194px;top:767px;width:9.7px;height:1px;background:#e4e4e4;"></div>
<svg style="left:182px;top:761.5px;" width="11.5" height="11.5" viewBox="0 0 11.5 11.5"><rect x="0.500" y="0.500" width="10.500" height="10.500" fill="#efefef" stroke="#c2c2c2"/><path d="M3 5.500 h5" stroke="#3d4f8f" stroke-width="1.400"/><path d="M5.500 3 v5" stroke="#3d4f8f" stroke-width="1.400"/></svg>
<svg style="left:0;top:0" width="1" height="1"><text x="206.7" y="771.7" font-size="13.6" fill="#3a3a3a" textLength="13.5" lengthAdjust="spacingAndGlyphs">柱</text></svg>
<div class="a" style="left:194px;top:788px;width:9.7px;height:1px;background:#e4e4e4;"></div>
<svg style="left:182px;top:782.5px;" width="11.5" height="11.5" viewBox="0 0 11.5 11.5"><rect x="0.500" y="0.500" width="10.500" height="10.500" fill="#efefef" stroke="#c2c2c2"/><path d="M3 5.500 h5" stroke="#3d4f8f" stroke-width="1.400"/><path d="M5.500 3 v5" stroke="#3d4f8f" stroke-width="1.400"/></svg>
<svg style="left:0;top:0" width="1" height="1"><text x="206.7" y="793.3" font-size="13.6" fill="#3a3a3a" textLength="28" lengthAdjust="spacingAndGlyphs">植栽</text></svg>
<div class="a" style="left:194px;top:810px;width:9.7px;height:1px;background:#e4e4e4;"></div>
<svg style="left:182px;top:804.5px;" width="11.5" height="11.5" viewBox="0 0 11.5 11.5"><rect x="0.500" y="0.500" width="10.500" height="10.500" fill="#efefef" stroke="#c2c2c2"/><path d="M3 5.500 h5" stroke="#3d4f8f" stroke-width="1.400"/><path d="M5.500 3 v5" stroke="#3d4f8f" stroke-width="1.400"/></svg>
<svg style="left:0;top:0" width="1" height="1"><text x="206.7" y="814.9" font-size="13.6" fill="#3a3a3a" textLength="57.5" lengthAdjust="spacingAndGlyphs">構造基礎</text></svg>
<div class="a" style="left:194px;top:831px;width:9.7px;height:1px;background:#e4e4e4;"></div>
<svg style="left:182px;top:825.5px;" width="11.5" height="11.5" viewBox="0 0 11.5 11.5"><rect x="0.500" y="0.500" width="10.500" height="10.500" fill="#efefef" stroke="#c2c2c2"/><path d="M3 5.500 h5" stroke="#3d4f8f" stroke-width="1.400"/><path d="M5.500 3 v5" stroke="#3d4f8f" stroke-width="1.400"/></svg>
<svg style="left:0;top:0" width="1" height="1"><text x="206.7" y="836.4" font-size="13.6" fill="#3a3a3a" textLength="88.3" lengthAdjust="spacingAndGlyphs">構造梁システム</text></svg>
<div class="a" style="left:194px;top:853px;width:9.7px;height:1px;background:#e4e4e4;"></div>
<svg style="left:182px;top:847.5px;" width="11.5" height="11.5" viewBox="0 0 11.5 11.5"><rect x="0.500" y="0.500" width="10.500" height="10.500" fill="#efefef" stroke="#c2c2c2"/><path d="M3 5.500 h5" stroke="#3d4f8f" stroke-width="1.400"/><path d="M5.500 3 v5" stroke="#3d4f8f" stroke-width="1.400"/></svg>
<svg style="left:0;top:0" width="1" height="1"><text x="206.7" y="858" font-size="13.6" fill="#3a3a3a" textLength="57" lengthAdjust="spacingAndGlyphs">注釈記号</text></svg>
<div class="a" style="left:194px;top:875px;width:9.7px;height:1px;background:#e4e4e4;"></div>
<svg style="left:182px;top:869.5px;" width="11.5" height="11.5" viewBox="0 0 11.5 11.5"><rect x="0.500" y="0.500" width="10.500" height="10.500" fill="#efefef" stroke="#c2c2c2"/><path d="M3 5.500 h5" stroke="#3d4f8f" stroke-width="1.400"/></svg>
<svg style="left:0;top:0" width="1" height="1"><text x="206.7" y="879.6" font-size="13.6" fill="#3a3a3a" textLength="14" lengthAdjust="spacingAndGlyphs">窓</text></svg>
<div class="a" style="left:219px;top:896px;width:9.7px;height:1px;background:#e4e4e4;"></div>
<svg style="left:207px;top:890.5px;" width="11.5" height="11.5" viewBox="0 0 11.5 11.5"><rect x="0.500" y="0.500" width="10.500" height="10.500" fill="#efefef" stroke="#c2c2c2"/><path d="M3 5.500 h5" stroke="#3d4f8f" stroke-width="1.400"/><path d="M5.500 3 v5" stroke="#3d4f8f" stroke-width="1.400"/></svg>
<svg style="left:0;top:0" width="1" height="1"><text x="231.7" y="901.2" font-size="13.6" fill="#3a3a3a" textLength="171" lengthAdjust="spacingAndGlyphs">窓 - 引違い 4 枚 2 溝 - 内付</text></svg>
<div class="a" style="left:219px;top:918px;width:9.7px;height:1px;background:#e4e4e4;"></div>
<svg style="left:207px;top:912.5px;" width="11.5" height="11.5" viewBox="0 0 11.5 11.5"><rect x="0.500" y="0.500" width="10.500" height="10.500" fill="#efefef" stroke="#c2c2c2"/><path d="M3 5.500 h5" stroke="#3d4f8f" stroke-width="1.400"/><path d="M5.500 3 v5" stroke="#3d4f8f" stroke-width="1.400"/></svg>
<svg style="left:0;top:0" width="1" height="1"><text x="231.7" y="922.8" font-size="13.6" fill="#3a3a3a" textLength="94.4" lengthAdjust="spacingAndGlyphs">窓 - 開き - 内付</text></svg>
<div class="a" style="left:219px;top:939px;width:9.7px;height:1px;background:#e4e4e4;"></div>
<svg style="left:207px;top:933.5px;" width="11.5" height="11.5" viewBox="0 0 11.5 11.5"><rect x="0.500" y="0.500" width="10.500" height="10.500" fill="#efefef" stroke="#c2c2c2"/><path d="M3 5.500 h5" stroke="#3d4f8f" stroke-width="1.400"/><path d="M5.500 3 v5" stroke="#3d4f8f" stroke-width="1.400"/></svg>
<svg style="left:0;top:0" width="1" height="1"><text x="231.7" y="944.4" font-size="13.6" fill="#3a3a3a" textLength="125" lengthAdjust="spacingAndGlyphs">窓-引違い 2 枚-内付</text></svg>
<div class="a" style="left:194px;top:961px;width:9.7px;height:1px;background:#e4e4e4;"></div>
<svg style="left:182px;top:955.5px;" width="11.5" height="11.5" viewBox="0 0 11.5 11.5"><rect x="0.500" y="0.500" width="10.500" height="10.500" fill="#efefef" stroke="#c2c2c2"/><path d="M3 5.500 h5" stroke="#3d4f8f" stroke-width="1.400"/><path d="M5.500 3 v5" stroke="#3d4f8f" stroke-width="1.400"/></svg>
<svg style="left:0;top:0" width="1" height="1"><text x="206.7" y="966" font-size="13.6" fill="#3a3a3a" textLength="57" lengthAdjust="spacingAndGlyphs">衛生器具</text></svg>
<div class="a" style="left:194px;top:982px;width:9.7px;height:1px;background:#e4e4e4;"></div>
<svg style="left:182px;top:976.5px;" width="11.5" height="11.5" viewBox="0 0 11.5 11.5"><rect x="0.500" y="0.500" width="10.500" height="10.500" fill="#efefef" stroke="#c2c2c2"/><path d="M3 5.500 h5" stroke="#3d4f8f" stroke-width="1.400"/><path d="M5.500 3 v5" stroke="#3d4f8f" stroke-width="1.400"/></svg>
<svg style="left:0;top:0" width="1" height="1"><text x="206.7" y="987.6" font-size="13.6" fill="#3a3a3a" textLength="75" lengthAdjust="spacingAndGlyphs">解析用リンク</text></svg>
<div class="a" style="left:519px;top:213px;width:943px;height:24px;background:#cccccc;"></div>
<div class="a" style="left:519px;top:213px;width:155px;height:24px;background:#ffffff;"></div>
<div class="a" style="left:518.7px;top:237px;width:919.3px;height:762px;background:#ffffff;"></div>
<div class="a" style="left:1437.8px;top:237px;width:19.7px;height:760px;background:#f0f0f0;"></div>
<div class="a" style="left:1457.5px;top:213px;width:2.5px;height:786px;background:#fafafa;"></div>
<div class="a" style="left:1460px;top:213px;width:2px;height:786px;background:#c6c6c6;"></div>
<div class="a" style="left:521.3px;top:976.3px;width:936.2px;height:20.7px;background:#f0f0f0;"></div>
<div class="a" style="left:1163px;top:977px;width:20px;height:20px;background:#cdcdcd;"></div>
<svg style="left:525px;top:216px;" width="20" height="18" viewBox="0 0 20 18"><rect x="0.700" y="1" width="12" height="14" fill="#eef0f4" stroke="#555" stroke-width="1.300"/><rect x="7" y="4" width="12" height="13" fill="#e6e9ee" stroke="#555" stroke-width="1.300"/><path d="M7 8 h5 M10 4 v4" stroke="#555" stroke-width="1" stroke-dasharray="2 1.500"/></svg>
<svg style="left:0;top:0" width="1" height="1"><text x="553" y="230.9" font-size="13.6" fill="#b9b9b9" textLength="93" lengthAdjust="spacingAndGlyphs">1階平面詳細図</text></svg>
<svg style="left:656px;top:219px;" width="12" height="12" viewBox="0 0 12 12"><path d="M1 1 l10 10 M11 1 l-10 10" stroke="#111" stroke-width="2"/></svg>
<svg style="left:1442px;top:221px;" width="13" height="9" viewBox="0 0 13 9"><path d="M0 1 h13" stroke="#222" stroke-width="1.600"/><path d="M0.500 4 h12 l-6 5z" fill="#222"/></svg>
<svg style="left:1443px;top:248px;" width="9" height="6" viewBox="0 0 9 6"><path d="M0.800 5.200 l3.700 -3.700 l3.700 3.700" fill="none" stroke="#444" stroke-width="1.500"/></svg>
<svg style="left:1443px;top:963px;" width="9" height="6" viewBox="0 0 9 6"><path d="M0.800 0.800 l3.700 3.700 l3.700 -3.700" fill="none" stroke="#444" stroke-width="1.500"/></svg>
<svg style="left:1423px;top:982px;" width="6" height="9" viewBox="0 0 6 9"><path d="M0.800 0.800 l3.700 3.700 l-3.700 3.700" fill="none" stroke="#333" stroke-width="1.500"/></svg>
<svg style="left:916px;top:982px;" width="6" height="9" viewBox="0 0 6 9"><path d="M5.200 0.800 l-3.700 3.700 l3.700 3.700" fill="none" stroke="#333" stroke-width="1.500"/></svg>
<svg style="left:1444px;top:985px;" width="10" height="10" viewBox="0 0 10 10"><g fill="#b5b5b5"><rect x="7" y="1" width="2" height="2"/><rect x="4" y="4" width="2" height="2"/><rect x="7" y="4" width="2" height="2"/><rect x="1" y="7" width="2" height="2"/><rect x="4" y="7" width="2" height="2"/><rect x="7" y="7" width="2" height="2"/></g></svg>
<div class="a" style="left:1402px;top:240px;width:34px;height:60px;background:#f5f5f5;border:1px solid #d6d6d6;border-radius:4px 4px 0 0;box-sizing:border-box"></div>
<svg style="left:1425px;top:241px;" width="9" height="9" viewBox="0 0 9 9"><circle cx="4.500" cy="4.500" r="4" fill="#d9d9d9" stroke="#bdbdbd"/><path d="M2.800 2.800 l3.400 3.400 M6.200 2.800 l-3.400 3.400" stroke="#f8f8f8" stroke-width="1.200"/></svg>
<svg style="left:1407px;top:258px;" width="26" height="24" viewBox="0 0 26 24"><path d="M1 14 v-7 a6 6 0 0 1 6 -6 h12 v12 a8 8 0 0 1 -8 8 h-1" fill="#ececec" stroke="#bdbdbd" stroke-width="1.400"/><circle cx="10" cy="11" r="5" fill="#f4f4f4" stroke="#b9b9b9" stroke-width="1.500"/><path d="M6.500 14.500 l-4 4" stroke="#b9b9b9" stroke-width="1.600"/><text x="12" y="23" font-family="Liberation Sans,sans-serif" font-weight="bold" font-size="9.500" fill="#86a9cf">2D</text></svg>
<svg style="left:1416px;top:289px;" width="6" height="4" viewBox="0 0 6 4"><path d="M0 0 h6 l-3 3.500z" fill="#9a9a9a"/></svg>
<svg style="left:0;top:0" width="1" height="1"><text x="556" y="992.3" font-size="14" fill="#222" textLength="33.5" lengthAdjust="spacingAndGlyphs">1 : 10</text></svg>
<svg style="left:621.5px;top:978px;" width="20" height="16" viewBox="0 0 20 16"><defs><pattern id="ck" width="3" height="3" patternUnits="userSpaceOnUse"><rect width="1.500" height="1.500" fill="#555"/><rect x="1.500" y="1.500" width="1.500" height="1.500" fill="#555"/></pattern></defs><rect x="0.600" y="0.600" width="18.800" height="14.300" fill="#f4f4f4"/><rect x="0.600" y="0.600" width="18.800" height="14.300" fill="url(#ck)" stroke="#333" stroke-width="1.200"/></svg>
<svg style="left:648px;top:978.5px;" width="19" height="16" viewBox="0 0 19 16"><path d="M1 6 l4 -5 h13 l-4 5z M1 6 h13 v9.500 h-13z M14 6 l4 -5 v9.500 l-4 5z" fill="#eceef2" stroke="#333" stroke-width="1.200" stroke-linejoin="round"/></svg>
<svg style="left:673.5px;top:977px;" width="20" height="18" viewBox="0 0 20 18"><g stroke="#d89a10" stroke-width="1.500"><path d="M8 0 v3 M8 13 v3 M0 8 h3 M13 8 h3 M2.300 2.300 l2 2 M11.700 11.700 l2 2 M2.300 13.700 l2 -2 M11.700 4.300 l2 -2"/></g><circle cx="8" cy="8" r="4.600" fill="#ffd54a" stroke="#c98a08" stroke-width="1"/><path d="M11 9.500 l7 7 M18 9.500 l-7 7" stroke="#d42020" stroke-width="2.600"/></svg>
<svg style="left:702px;top:978px;" width="18" height="17" viewBox="0 0 18 17"><circle cx="7" cy="6.500" r="5.500" fill="#e9f1fb" stroke="#2f6fc0" stroke-width="1.400"/><path d="M1.500 13 h9 M3 15.500 h7" stroke="#444" stroke-width="1.300"/><path d="M10 9 l7 7 M17 9 l-7 7" stroke="#d42020" stroke-width="2.600"/></svg>
<svg style="left:726px;top:978px;" width="20" height="17" viewBox="0 0 20 17"><path d="M3.500 14 v-9.500 h13" fill="none" stroke="#2f6fc0" stroke-width="2.400"/><path d="M0 11.500 h6 M12.500 1 v5" stroke="#333" stroke-width="1.100"/><rect x="6" y="7" width="9" height="6" fill="#dfe8f4" stroke="#777" stroke-width="0.800"/><path d="M9.500 8.500 l8 8 M17.500 8.500 l-8 8" stroke="#d42020" stroke-width="2.600"/></svg>
<svg style="left:752.5px;top:978px;" width="20" height="17" viewBox="0 0 20 17"><path d="M3.500 14 v-9.500 h11" fill="none" stroke="#2f6fc0" stroke-width="2.400"/><path d="M0 11.500 h6 M12.500 1 v5" stroke="#333" stroke-width="1.100"/><rect x="6" y="8" width="6" height="5" fill="#f0d0d0" stroke="#b44" stroke-width="0.800"/><path d="M13 7 a3 3 0 0 1 6 0 c0 2.200 -1.500 2.600 -1.500 4.800 h-3 c0 -2.200 -1.500 -2.600 -1.500 -4.800z" fill="#dbeafc" stroke="#3b7bd0" stroke-width="1.100"/><path d="M14.800 13.500 h2.400 v2 h-2.400z" fill="#3b7bd0"/></svg>
<svg style="left:779px;top:981px;" width="20" height="12" viewBox="0 0 20 12"><path d="M0.500 1 q3 -0.500 4.500 3.500 l1.500 3.500 q1.500 3 4 1 M12 4 q-1.500 -1 -2.500 1" fill="none" stroke="#444" stroke-width="1.200"/><path d="M11 3.500 q4 -3.500 8 -0.500 q0.500 5 -4 6 q-4 0 -4 -5.500z" fill="#eef3f8" stroke="#444" stroke-width="1.200"/></svg>
<svg style="left:810.5px;top:979.5px;" width="10" height="15" viewBox="0 0 10 15"><path d="M1 5 a4 4 0 0 1 8 0 c0 2.700 -2 3.300 -2 5.800 h-4 c0 -2.500 -2 -3.100 -2 -5.800z" fill="#dbeafc" stroke="#3b7bd0" stroke-width="1.300"/><path d="M3.300 11.800 h3.400 v2.600 h-3.400z" fill="#3b7bd0"/></svg>
<svg style="left:832.5px;top:979px;" width="19" height="16" viewBox="0 0 19 16"><rect x="1" y="2.500" width="16.500" height="12" fill="#f2f2f2" stroke="#222" stroke-width="1.600" stroke-dasharray="3 1.500"/><rect x="8" y="7" width="8" height="6.500" rx="1" fill="#fff" stroke="#222" stroke-width="1.100"/><circle cx="12" cy="10.300" r="1.700" fill="#222"/><path d="M3 0 v2.500 M15 0 v2.500" stroke="#222" stroke-width="1.200"/></svg>
<svg style="left:858px;top:978px;" width="21" height="17" viewBox="0 0 21 17"><path d="M0.500 8 l7.500 -6.500 l7.500 6.500" fill="none" stroke="#666" stroke-width="1.300"/><path d="M2 8 v8.500 h12 v-8.500" fill="#e9e9e9" stroke="#666" stroke-width="1"/><path d="M4 9 v7.500 M7 9 v7.500" stroke="#c02020" stroke-width="1.600"/><path d="M2 12 h7" stroke="#c02020" stroke-width="1.200"/><circle cx="15.500" cy="8" r="4.500" fill="#ffcf5a" stroke="#e0a020" stroke-width="0.800"/><path d="M14 12.500 h3 v3 h-3z" fill="#3b7bd0"/></svg>
<svg style="left:885px;top:978px;" width="20" height="17" viewBox="0 0 20 17"><path d="M1 0 v16 M18 0 v8 M1 3.500 h17" fill="none" stroke="#333" stroke-width="1.200"/><path d="M1 12.500 h9" stroke="#555" stroke-width="1" stroke-dasharray="2 1.500"/><rect x="10.500" y="10" width="9" height="6.500" fill="#8a8a8a" stroke="#444" stroke-width="0.900"/><path d="M12.500 10 v-1.500 a2.500 2.500 0 0 1 5 0 v1.500" fill="none" stroke="#555" stroke-width="1.200"/></svg>
<div class="a" style="left:1462px;top:213px;width:308px;height:785px;background:#eeeeee;"></div>
<svg style="left:0;top:0" width="1" height="1"><text x="1466.6" y="230.5" font-size="13.6" fill="#3c3c3c" textLength="53" lengthAdjust="spacingAndGlyphs">プロパティ</text></svg>
<div class="a" style="left:1464px;top:237px;width:304px;height:2px;background:#4a4a4a;"></div>
<div class="a" style="left:1464px;top:324.5px;width:304px;height:2px;background:#4a4a4a;"></div>
<div class="a" style="left:1467px;top:241px;width:81px;height:80px;border:1px solid #dedede;box-sizing:border-box;background:#efefef"></div>
<svg style="left:0;top:0" width="1" height="1"><text x="1553" y="277.8" font-size="13.6" fill="#4a4a4a" textLength="86" lengthAdjust="spacingAndGlyphs">ブラウザ - ビュー</text></svg>
<svg style="left:0;top:0" width="1" height="1"><text x="1553" y="297.1" font-size="13.6" fill="#4a4a4a" textLength="43" lengthAdjust="spacingAndGlyphs">分類順</text></svg>
<svg style="left:1756px;top:279.5px;" width="9" height="5" viewBox="0 0 9 5"><path d="M0 0 h9 l-4.500 5z" fill="#111"/></svg>
<div class="a" style="left:1464px;top:327px;width:223px;height:24px;background:#cdcdcd;"></div>
<svg style="left:1673px;top:336px;" width="9" height="6" viewBox="0 0 9 6"><path d="M0.800 0.800 l3.700 3.700 l3.700 -3.700" fill="none" stroke="#b5b5b5" stroke-width="1.200"/></svg>
<svg style="left:1690px;top:334px;" width="8" height="9" viewBox="0 0 8 9"><rect x="0.500" y="0.500" width="7" height="8" fill="none" stroke="#b9b9b9"/><path d="M2 3 h4 M2 5.500 h4" stroke="#b9b9b9"/></svg>
<svg style="left:0;top:0" width="1" height="1"><text x="1702" y="343.8" font-size="13.6" fill="#b2b2b2" textLength="61.5" lengthAdjust="spacingAndGlyphs">タイプ編集</text></svg>
<div class="a" style="left:1464px;top:352px;width:304px;height:22px;background:#dcdcdc;"></div>
<svg style="left:1757px;top:356px;" width="5" height="5" viewBox="0 0 5 5"><path d="M0.500 2.500 l2 -2 l2 2 M0.500 4.800 l2 -2 l2 2" fill="none" stroke="#666" stroke-width="0.800"/></svg>
<div class="a" style="left:1464px;top:398px;width:304px;height:1px;background:#d6d6d6;"></div>
<div class="a" style="left:1610px;top:375px;width:143px;height:23px;background:#cdcdcd;"></div>
<svg style="left:0;top:0" width="1" height="1"><text x="1662" y="391.6" font-size="13.6" fill="#9b9b9b" textLength="38" lengthAdjust="spacingAndGlyphs">編集...</text></svg>
<div class="a" style="left:1464px;top:422px;width:304px;height:1px;background:#d6d6d6;"></div>
<div class="a" style="left:1610px;top:399px;width:143px;height:23px;background:#cdcdcd;"></div>
<svg style="left:0;top:0" width="1" height="1"><text x="1662" y="415.6" font-size="13.6" fill="#9b9b9b" textLength="38" lengthAdjust="spacingAndGlyphs">編集...</text></svg>
<div class="a" style="left:1753px;top:374px;width:1px;height:48px;background:#dcdcdc;"></div>
<div class="a" style="left:1767px;top:327px;width:1px;height:96px;background:#dcdcdc;"></div>
<svg style="left:0;top:0" width="1" height="1"><text x="1466" y="986.6" font-size="13.6" fill="#3b6fc9" text-decoration="underline" textLength="91" lengthAdjust="spacingAndGlyphs">プロパティ ヘルプ</text></svg>
<div class="a" style="left:1673px;top:972px;width:94px;height:23px;background:#cdcdcd;"></div>
<svg style="left:0;top:0" width="1" height="1"><text x="1706" y="989.1" font-size="13.6" fill="#9b9b9b" textLength="28" lengthAdjust="spacingAndGlyphs">適用</text></svg>
<div class="a" style="left:150px;top:996px;width:1620px;height:4px;background:#f3f3f3;"></div>
<div class="a" style="left:150px;top:999.5px;width:1620px;height:31.5px;background:#cccccc;"></div>
<svg style="left:0;top:0" width="1" height="1"><text x="153" y="1020.6" font-size="13.6" fill="#333" textLength="42" lengthAdjust="spacingAndGlyphs">準備中</text></svg>
<div class="a" style="left:705.8px;top:1002.2px;width:246px;height:20.6px;background:#ffffff;"></div>
<svg style="left:938px;top:1010px;" width="9" height="6" viewBox="0 0 9 6"><path d="M0.800 0.800 l3.700 3.700 l3.700 -3.700" fill="none" stroke="#c4c4c4" stroke-width="1.200"/></svg>
<svg style="left:681px;top:1004px;" width="22" height="22" viewBox="0 0 22 22"><g fill="#bdbdbd" stroke="#e6e6e6" stroke-width="0.800"><path d="M2 10 l5 -3 l5 3 v9 l-5 3 l-5 -3z"/><path d="M7 4 l5 -3 l5 3 v6 l-5 3 l-5 -3z"/><path d="M13 11 l4 -2 l4 2 v8 l-4 2 l-4 -2z"/></g></svg>
<svg style="left:956px;top:1005px;" width="18" height="20" viewBox="0 0 18 20"><g fill="#b4b4b4"><path d="M5 1 h11 v8 h-11z"/><path d="M6 9 h4 v4 l-3 6 h-6 l3 -6z"/></g><path d="M7 3.500 h7 M7 6 h7" stroke="#dcdcdc" stroke-width="1"/></svg>
<svg style="left:0;top:0" width="1" height="1"><text x="980" y="1024.3" font-size="14" fill="#333" textLength="11" lengthAdjust="spacingAndGlyphs">:0</text></svg>
<div class="a" style="left:1004px;top:1006px;width:19px;height:19px;background:#b3b3b3;border-radius:2px;"></div>
<div class="a" style="left:1030px;top:1006px;width:19px;height:19px;background:#b3b3b3;"></div>
<svg style="left:1030px;top:1006px;" width="19" height="19" viewBox="0 0 19 19"><path d="M0 0 h8 v8 h-8z" fill="#cbcbcb"/><path d="M3 12 h6 v-3 l5 4.500 l-5 4.500 v-3 h-6z" fill="#e2e2e2"/></svg>
<div class="a" style="left:1054px;top:1002.2px;width:247px;height:20.6px;background:#ffffff;"></div>
<svg style="left:0;top:0" width="1" height="1"><text x="1056" y="1018.6" font-size="13.6" fill="#9a9a9a" textLength="69" lengthAdjust="spacingAndGlyphs">メイン モデル</text></svg>
<svg style="left:1287px;top:1010px;" width="9" height="6" viewBox="0 0 9 6"><path d="M0.800 0.800 l3.700 3.700 l3.700 -3.700" fill="none" stroke="#c4c4c4" stroke-width="1.200"/></svg>
<svg style="left:1550px;top:1006px;" width="20" height="20" viewBox="0 0 20 20"><g fill="#a9a9a9"><circle cx="5" cy="5" r="4"/><circle cx="14" cy="5" r="4"/><path d="M8 6 h4 v12 h-4z"/><path d="M10 12 l6 4 l-2 3z"/></g></svg>
<svg style="left:1576px;top:1007px;" width="22" height="18" viewBox="0 0 22 18"><path d="M1 13 l12 -12 h8 l-3 5 h3 l-3 4 h3 l-4 6 h-16z" fill="#a9a9a9"/></svg>
<svg style="left:1601px;top:1006px;" width="22" height="20" viewBox="0 0 22 20"><path d="M4 1 h10 v7 l6 8 h-5 v3 h-3 v-3 h-10 l5 -8z" fill="#a9a9a9"/></svg>
<svg style="left:1627px;top:1006px;" width="22" height="20" viewBox="0 0 22 20"><path d="M3 1 h8 l2 8 l6 8 h-5 v2 h-3 v-2 h-10 l3 -8z" fill="#a9a9a9"/></svg>
<svg style="left:1654px;top:1005px;" width="22" height="22" viewBox="0 0 22 22"><g fill="none" stroke="#a9a9a9" stroke-width="1.600"><path d="M6 1 v10 M1 6 h10 M3 3 l6 6"/><path d="M11 9 l0 9 l3 -2 l2 4 l2 -1 l-2 -4 h4z" fill="#e0e0e0" stroke-width="1"/></g></svg>
<svg style="left:1679px;top:1006px;" width="20" height="20" viewBox="0 0 20 20"><circle cx="10" cy="10" r="7" fill="none" stroke="#b2b2b2" stroke-width="3.500" stroke-dasharray="3.500 2"/></svg>
<svg style="left:1703px;top:1006px;" width="22" height="20" viewBox="0 0 22 20"><path d="M1 1.500 h19 l-7.500 9 v8 l-4 -2.500 v-5.500z" fill="#dfe4ea" stroke="#555" stroke-width="1.500" stroke-linejoin="round"/><path d="M3.500 4 h14" stroke="#888" stroke-width="1"/></svg>
<svg style="left:0;top:0" width="1" height="1"><text x="1724" y="1022.3" font-size="14" fill="#333" textLength="11" lengthAdjust="spacingAndGlyphs">:0</text></svg>
<div class="a" style="left:150px;top:1031px;width:1616px;height:49px;background:#cde1e7;"></div>
<div class="a" style="left:1764px;top:1031px;width:1px;height:49px;background:#a9bcc3;"></div>
<div class="a" style="left:1765px;top:1031px;width:5px;height:49px;background:#cde1e7;"></div>
<div class="a" style="left:509px;top:1031px;width:58px;height:49px;background:#e2eef1;"></div>
<div class="a" style="left:334px;top:1078px;width:48px;height:2px;background:#2cb3c7;"></div>
<div class="a" style="left:394px;top:1078px;width:48px;height:2px;background:#2cb3c7;"></div>
<div class="a" style="left:453.5px;top:1078px;width:48px;height:2px;background:#2cb3c7;"></div>
<div class="a" style="left:509px;top:1078px;width:58px;height:2px;background:#2cb3c7;"></div>
<div class="a" style="left:574px;top:1078px;width:47px;height:2px;background:#2cb3c7;"></div>
<div class="a" style="left:633.5px;top:1078px;width:49px;height:2px;background:#2cb3c7;"></div>
<svg style="left:170.5px;top:1046.5px;" width="18" height="18" viewBox="0 0 18 18"><path d="M0 2.600 l7.500 -1 v7 h-7.500z M8.500 1.400 l9.500 -1.400 v8.600 h-9.500z M0 9.600 h7.500 v7 l-7.500 -1z M8.500 9.600 h9.500 v8.400 l-9.500 -1.300z" fill="#111"/></svg>
<svg style="left:225px;top:1042px;" width="26" height="26" viewBox="0 0 26 26"><circle cx="16" cy="10" r="7.500" fill="none" stroke="#111" stroke-width="1.600"/><path d="M10.500 15.500 l-9.500 9.500" stroke="#111" stroke-width="1.700"/></svg>
<svg style="left:285px;top:1045px;" width="24" height="21" viewBox="0 0 24 21"><g fill="none" stroke="#111" stroke-width="1.400"><rect x="2.500" y="5" width="11" height="11"/><path d="M0 1 h16 M0 20 h16 M19.500 0 v5 M19.500 11 v10"/></g><rect x="18" y="7" width="3" height="3" fill="#111"/></svg>
<svg style="left:343px;top:1042px;" width="29" height="24" viewBox="0 0 29 24"><path d="M1 3 a1 1 0 0 1 1 -1 h9 l2 2.500 h-12z" fill="#e8a317"/><path d="M1 4 h26 a1 1 0 0 1 1 1 v17 a1 1 0 0 1 -1 1 h-25 a1 1 0 0 1 -1 -1z" fill="#fbd35a"/><path d="M1 12 h27 v10 a1 1 0 0 1 -1 1 h-25 a1 1 0 0 1 -1 -1z" fill="#f7c53f"/><path d="M7 23 v-8 h15 v8 h-4 v-4.500 h-7 v4.500z" fill="#2b8bd6"/></svg>
<svg style="left:404px;top:1041px;" width="32" height="30" viewBox="0 0 32 30"><circle cx="14" cy="14" r="13.500" fill="#dd4b3e"/><path d="M14 14 L2.300 7.200 A13.500 13.500 0 0 0 9 26.500z" fill="#2fa350"/><path d="M14 14 L9 26.500 A13.500 13.500 0 0 0 27.500 13z" fill="#f8c62b"/><path d="M14 14 L27.300 11 A13.500 13.500 0 0 0 2.300 7.200z" fill="#dd4b3e"/><circle cx="14" cy="14" r="6" fill="#fff"/><circle cx="14" cy="14" r="4.600" fill="#4a8af4"/><circle cx="22.500" cy="21" r="8.500" fill="#c0392b"/><text x="22.500" y="25" font-family="Liberation Sans,sans-serif" font-weight="bold" font-size="11" fill="#f2e6d0" text-anchor="middle">Y</text></svg>
<svg style="left:463px;top:1042px;" width="29" height="27" viewBox="0 0 29 27"><rect x="8" y="1" width="20" height="25" rx="1.500" fill="#2b7cd3"/><rect x="8" y="1" width="20" height="6.500" fill="#41a5ee"/><rect x="8" y="13.500" width="20" height="6" fill="#185abd"/><rect x="8" y="19.500" width="20" height="6.500" fill="#103f91"/><rect x="0" y="6.500" width="15" height="15" rx="1.200" fill="#185abd"/><text x="7.500" y="18.500" font-family="Liberation Sans,sans-serif" font-weight="bold" font-size="11.500" fill="#fff" text-anchor="middle">W</text></svg>
<svg style="left:524px;top:1041px;" width="28" height="28" viewBox="0 0 28 28"><path d="M2 2 h16 v22 h-16z" fill="#c5d9ea" opacity="0.700"/><path d="M7 4 h8 a6 6 0 0 1 3 11 l6 10 h-5.500 l-5 -9 h-2 v9 h-4.500z M11.500 8 v4.500 h3 a2.200 2.200 0 0 0 0 -4.500z" fill="#2566a8" fill-rule="evenodd"/><path d="M7 4 h4.500 v21 h-4.500z" fill="#174a80"/></svg>
<svg style="left:583px;top:1041px;" width="28" height="28" viewBox="0 0 28 28"><rect x="0" y="0" width="28" height="27" rx="5" fill="#0a0a5e"/><text x="14" y="19.500" font-family="Liberation Sans,sans-serif" font-weight="bold" font-size="14" fill="#a9a6ff" text-anchor="middle">Pr</text></svg>
<svg style="left:645px;top:1043px;" width="25" height="25" viewBox="0 0 25 25"><circle cx="12.500" cy="12.500" r="6.500" fill="none" stroke="#111" stroke-width="2.600"/><g stroke="#111" stroke-width="3.400"><path d="M12.500 1 v4.500 M12.500 19.500 v4.500 M1 12.500 h4.500 M19.500 12.500 h4.500 M4.400 4.400 l3.200 3.200 M17.400 17.400 l3.200 3.200 M4.400 20.600 l3.200 -3.200 M17.400 7.600 l3.200 -3.200"/></g></svg>
<svg style="left:1564px;top:1049px;" width="16" height="9" viewBox="0 0 16 9"><path d="M1 8 l7 -7 l7 7" fill="none" stroke="#111" stroke-width="1.400"/></svg>
<svg style="left:1601px;top:1046px;" width="19" height="18" viewBox="0 0 19 18"><g fill="#111"><path d="M4.800 0 l4.700 3 l-4.700 3 l-4.800 -3z M14.200 0 l4.800 3 l-4.800 3 l-4.700 -3z M4.800 6.500 l4.700 3 l-4.700 3 l-4.800 -3z M14.200 6.500 l4.800 3 l-4.800 3 l-4.700 -3z M9.500 10.500 l4.700 3 l-4.700 3 l-4.700 -3z"/></g></svg>
<svg style="left:1636px;top:1045px;" width="37" height="21" viewBox="0 0 37 21"><rect x="0.700" y="0.700" width="35.500" height="19.500" fill="none" stroke="#111" stroke-width="1.400"/><path d="M4 5.500 h29 M4 9.500 h29" stroke="#111" stroke-width="1.600" stroke-dasharray="2 1.600"/><path d="M4 14.500 h4 M10 14.500 h17 M29 14.500 h4" stroke="#111" stroke-width="1.600"/></svg>
<svg style="left:0;top:0" width="1" height="1"><text x="1685" y="1065" font-size="24" fill="#111" textLength="14" lengthAdjust="spacingAndGlyphs">A</text></svg>
<svg style="left:1720px;top:1046px;" width="22" height="22" viewBox="0 0 22 22"><path d="M1 1 h18 v14 h-9 l-4 4 v-4 h-5z" fill="#111"/><path d="M4 5 h12 M4 8 h12 M4 11 h8" stroke="#cde1e7" stroke-width="1.200"/><circle cx="17" cy="17" r="3.500" fill="#cde1e7" stroke="#111" stroke-width="1.200"/></svg>
<div class="a" style="left:577px;top:295px;width:977px;height:545px;background:#f0f0f0;box-shadow:0 0 0 1px rgba(110,110,110,0.22),0 4px 14px 1px rgba(0,0,0,0.20);"></div>
<div class="a" style="left:577px;top:295px;width:977px;height:34.5px;background:#ffffff;"></div>
<svg style="left:586px;top:302px;" width="19" height="19" viewBox="0 0 19 19"><rect x="0" y="0" width="19" height="19" fill="#d7e6f5"/><path d="M4.500 2.500 h6 a4.300 4.300 0 0 1 2 8 l4 7 h-4 l-3.400 -6.300 h-1.300 v6.300 h-3.300z M7.800 5.300 v3.200 h2.200 a1.600 1.600 0 0 0 0 -3.200z" fill="#1f63a8" fill-rule="evenodd"/><path d="M4.500 2.500 h3.300 v15 h-3.300z" fill="#144a82"/></svg>
<svg style="left:0;top:0" width="1" height="1"><text x="608.5" y="316.8" font-size="12.7" fill="#111" textLength="68" lengthAdjust="spacingAndGlyphs">ファミリロード</text></svg>
<svg style="left:0;top:0" width="1" height="1"><text x="1465.4" y="316.8" font-size="14" fill="#222" textLength="5.3" lengthAdjust="spacingAndGlyphs">?</text></svg>
<svg style="left:1519.5px;top:306px;" width="11" height="11" viewBox="0 0 11 11"><path d="M0.500 0.500 l10 10 M10.500 0.500 l-10 10" stroke="#222" stroke-width="1.100"/></svg>
<svg style="left:0;top:0" width="1" height="1"><text x="655.6" y="355.8" font-size="12.7" fill="#111" textLength="70" lengthAdjust="spacingAndGlyphs">探す場所(I):</text></svg>
<div class="a" style="left:737px;top:337px;width:596px;height:23px;background:#e1e1e1;border:1px solid #cfcfcf;box-sizing:border-box"></div>
<svg style="left:745px;top:340.5px;" width="12" height="15" viewBox="0 0 12 15"><path d="M0 1.500 l4.500 -1.500 h7.500 v12 l-7.500 0 l-4.500 1.500z" fill="#f3d47a"/><path d="M0 1.500 l5 1 v12.500 l-5 -1.500z" fill="#f9e39b"/><path d="M5 2.500 h7 v10.500 h-7z" fill="#efc85f" opacity="0.550"/></svg>
<svg style="left:0;top:0" width="1" height="1"><text x="766.5" y="351.8" font-size="12.7" fill="#111" textLength="20" lengthAdjust="spacingAndGlyphs">ドア</text></svg>
<svg style="left:1317.5px;top:345.5px;" width="9" height="6" viewBox="0 0 9 6"><path d="M0.800 0.800 l3.700 3.700 l3.700 -3.700" fill="none" stroke="#555" stroke-width="1.100"/></svg>
<svg style="left:1343px;top:345px;" width="20" height="18" viewBox="0 0 20 18"><path d="M0.500 9 l8.500 -8.500 v5.500 h10 v6 h-10 v5.500z" fill="#1e88e5"/></svg>
<svg style="left:1375px;top:345.5px;" width="20" height="19" viewBox="0 0 20 19"><path d="M0.500 1.500 a1 1 0 0 1 1 -1 h5.500 l2 2.500 h6.500 a1 1 0 0 1 1 1 v9.500 a1 1 0 0 1 -1 1 h-14 a1 1 0 0 1 -1 -1z" fill="#ffa70f"/></svg>
<svg style="left:1385px;top:355px;" width="10" height="10" viewBox="0 0 10 10"><path d="M0 9 h5.500 v-5 h-2 l3.300 -4 l3.200 4 h-2 v7.500 h-8z" fill="#1e88e5"/></svg>
<svg style="left:1409px;top:347px;" width="16" height="16" viewBox="0 0 16 16"><path d="M1.500 1.500 l13 13 M14.500 1.500 l-13 13" stroke="#ec2024" stroke-width="3.200"/></svg>
<svg style="left:1441px;top:345.5px;" width="20" height="19" viewBox="0 0 20 19"><path d="M0.500 1.500 a1 1 0 0 1 1 -1 h5.500 l2 2.500 h6.500 a1 1 0 0 1 1 1 v9.500 a1 1 0 0 1 -1 1 h-14 a1 1 0 0 1 -1 -1z" fill="#ffa70f"/></svg>
<svg style="left:1452.5px;top:356.5px;" width="8" height="8" viewBox="0 0 8 8"><path d="M4 0 v8 M0 4 h8" stroke="#1aaa3c" stroke-width="2.400"/></svg>
<svg style="left:0;top:0" width="1" height="1"><text x="1473.7" y="357.3" font-size="12.7" fill="#111" textLength="49.5" lengthAdjust="spacingAndGlyphs">ビュー(V)</text></svg>
<svg style="left:1536.5px;top:351px;" width="9.5" height="5.5" viewBox="0 0 9.5 5.5"><path d="M0 0 h9.500 l-4.750 5.500z" fill="#111"/></svg>
<div class="a" style="left:592px;top:369px;width:134px;height:422px;background:#f0f0f0;border:1px solid #d2d2d2;box-sizing:border-box"></div>
<div class="a" style="left:593px;top:370.5px;width:111px;height:420px;background:#a0a0a0;"></div>
<div class="a" style="left:704px;top:370.5px;width:20.5px;height:420px;background:#f0f0f0;"></div>
<div class="a" style="left:705px;top:445px;width:19.5px;height:324.5px;background:#cdcdcd;"></div>
<svg style="left:710.5px;top:378.5px;" width="9" height="6" viewBox="0 0 9 6"><path d="M0.800 5.200 l3.700 -3.700 l3.700 3.700" fill="none" stroke="#444" stroke-width="1.400"/></svg>
<svg style="left:710.5px;top:778px;" width="9" height="6" viewBox="0 0 9 6"><path d="M0.800 0.800 l3.700 3.700 l3.700 -3.700" fill="none" stroke="#444" stroke-width="1.400"/></svg>
<svg style="left:634px;top:379px;" width="30" height="34" viewBox="0 0 30 34"><g transform="translate(0,0)"><path d="M0 3 l9 -3 h12 v26 h-12 l-9 6z" fill="#f5d77e"/><path d="M0 3 l8 2 v27 l-8 -4z" fill="#fbe9a6"/></g><path d="M11 10 h9 l5 5 v16 h-14z" fill="#f4f6fa"/><path d="M20 10 v5 h5z" fill="#cfd6e2"/><path d="M19 22 h5 v3 h-5z" fill="#3a8ee6"/><path d="M13 15 h5 M13 18 h4" stroke="#6fa8e8" stroke-width="1.200"/></svg>
<svg style="left:0;top:0" width="1" height="1"><text x="617.5" y="432.8" font-size="12.7" fill="#ffffff" textLength="62" lengthAdjust="spacingAndGlyphs">ドキュメント</text></svg>
<svg style="left:630px;top:443px;" width="36" height="36" viewBox="0 0 36 36"><path d="M8 3 l20 9 v17 l-20 -7z" fill="#29a3ef"/><path d="M8 3 l20 9 l-20 10z" fill="#57bdf7" opacity="0.550"/><path d="M2 28 l14 5 l12 -3.500 l-12 -4z" fill="#c9ccd1"/><path d="M14 24 l6 2 v3 l-6 -2z" fill="#9aa0a8"/></svg>
<svg style="left:0;top:0" width="1" height="1"><text x="603" y="497.1" font-size="12.7" fill="#ffffff" textLength="90" lengthAdjust="spacingAndGlyphs">マイ コンピュータ</text></svg>
<svg style="left:630px;top:507px;" width="38" height="40" viewBox="0 0 38 40"><circle cx="24" cy="13" r="12" fill="#5fb0c8"/><path d="M16 5 q6 2 5 7 q4 3 9 0 q3 -4 1 -8" fill="#8fd0b0" opacity="0.800"/><path d="M3 14 l20 6 v14 l-20 -5z" fill="#2d9fee"/><path d="M3 14 l20 6 l-20 8z" fill="#61c0f8" opacity="0.500"/><path d="M10 33 l10 3 v3 l-10 -3z" fill="#b4bac2"/></svg>
<svg style="left:0;top:0" width="1" height="1"><text x="603.5" y="562.1" font-size="12.7" fill="#ffffff" textLength="89" lengthAdjust="spacingAndGlyphs">マイ ネットワーク</text></svg>
<svg style="left:635px;top:574px;" width="30" height="36" viewBox="0 0 30 36"><g transform="translate(0,0)"><path d="M0 3 l9 -3 h12 v26 h-12 l-9 6z" fill="#f5d77e"/><path d="M0 3 l8 2 v27 l-8 -4z" fill="#fbe9a6"/></g><path d="M20 12 l2.800 6.200 l6.700 0.600 l-5 4.500 l1.500 6.600 l-6 -3.500 l-6 3.500 l1.500 -6.600 l-5 -4.500 l6.700 -0.600z" fill="#f6b01e"/></svg>
<svg style="left:0;top:0" width="1" height="1"><text x="616.7" y="628.1" font-size="12.7" fill="#ffffff" textLength="62.6" lengthAdjust="spacingAndGlyphs">お気に入り</text></svg>
<svg style="left:630px;top:644px;" width="35" height="26" viewBox="0 0 35 26"><rect x="0" y="0" width="35" height="25" fill="#2aa0f0"/><path d="M0 25 l35 -25 v25z" fill="#1c8fe4" opacity="0.600"/></svg>
<svg style="left:0;top:0" width="1" height="1"><text x="616.7" y="693.1" font-size="12.7" fill="#ffffff" textLength="62.6" lengthAdjust="spacingAndGlyphs">デスクトップ</text></svg>
<svg style="left:635px;top:706px;" width="24" height="33" viewBox="0 0 24 33"><g transform="translate(0,0)"><path d="M0 3 l9 -3 h12 v26 h-12 l-9 6z" fill="#f5d77e"/><path d="M0 3 l8 2 v27 l-8 -4z" fill="#fbe9a6"/></g></svg>
<svg style="left:0;top:0" width="1" height="1"><text x="605.5" y="760.1" font-size="13.5" fill="#ffffff" textLength="85" lengthAdjust="spacingAndGlyphs">Metric Library</text></svg>
<div class="a" style="left:737px;top:369px;width:596px;height:364.5px;background:#ffffff;"></div>
<div class="a" style="left:1067px;top:369px;width:1px;height:364px;background:#f3f3f3;"></div>
<div class="a" style="left:1213px;top:369px;width:1px;height:364px;background:#f3f3f3;"></div>
<svg style="left:739px;top:376px;" width="14" height="14" viewBox="0 0 14 14"><rect x="0.600" y="0.600" width="12.800" height="12.800" fill="#fff" stroke="#333" stroke-width="1.100"/></svg>
<svg style="left:0;top:0" width="1" height="1"><text x="757.4" y="387.8" font-size="12.7" fill="#333" textLength="27" lengthAdjust="spacingAndGlyphs">名前</text></svg>
<svg style="left:897.5px;top:371.5px;" width="8" height="5" viewBox="0 0 8 5"><path d="M0.500 4.300 l3.500 -3.500 l3.500 3.500" fill="none" stroke="#999" stroke-width="0.900"/></svg>
<svg style="left:0;top:0" width="1" height="1"><text x="1071.7" y="387.5" font-size="12.7" fill="#444" textLength="27.5" lengthAdjust="spacingAndGlyphs">種類</text></svg>
<svg style="left:760px;top:398px;" width="12" height="15" viewBox="0 0 12 15"><path d="M0 1.500 l4.500 -1.500 h7.500 v12 l-7.500 0 l-4.500 1.500z" fill="#f3d47a"/><path d="M0 1.500 l5 1 v12.500 l-5 -1.500z" fill="#f9e39b"/><path d="M5 2.500 h7 v10.500 h-7z" fill="#efc85f" opacity="0.550"/></svg>
<svg style="left:0;top:0" width="1" height="1"><text x="777.5" y="411.8" font-size="12.7" fill="#222" textLength="50.5" lengthAdjust="spacingAndGlyphs">鋼製ドア</text></svg>
<svg style="left:0;top:0" width="1" height="1"><text x="1071.5" y="410.6" font-size="12.7" fill="#222" textLength="96" lengthAdjust="spacingAndGlyphs">ファイル フォルダー</text></svg>
<svg style="left:760px;top:420.5px;" width="12" height="15" viewBox="0 0 12 15"><path d="M0 1.500 l4.500 -1.500 h7.500 v12 l-7.500 0 l-4.500 1.500z" fill="#f3d47a"/><path d="M0 1.500 l5 1 v12.500 l-5 -1.500z" fill="#f9e39b"/><path d="M5 2.500 h7 v10.500 h-7z" fill="#efc85f" opacity="0.550"/></svg>
<svg style="left:0;top:0" width="1" height="1"><text x="777.5" y="433.6" font-size="12.7" fill="#222" textLength="28.5" lengthAdjust="spacingAndGlyphs">部品</text></svg>
<svg style="left:0;top:0" width="1" height="1"><text x="1071.5" y="433.1" font-size="12.7" fill="#222" textLength="96" lengthAdjust="spacingAndGlyphs">ファイル フォルダー</text></svg>
<svg style="left:760px;top:443px;" width="12" height="15" viewBox="0 0 12 15"><path d="M0 1.500 l4.500 -1.500 h7.500 v12 l-7.500 0 l-4.500 1.500z" fill="#f3d47a"/><path d="M0 1.500 l5 1 v12.500 l-5 -1.500z" fill="#f9e39b"/><path d="M5 2.500 h7 v10.500 h-7z" fill="#efc85f" opacity="0.550"/></svg>
<svg style="left:0;top:0" width="1" height="1"><text x="777.5" y="455.4" font-size="12.7" fill="#222" textLength="50.5" lengthAdjust="spacingAndGlyphs">木製ドア</text></svg>
<svg style="left:0;top:0" width="1" height="1"><text x="1071.5" y="455.4" font-size="12.7" fill="#222" textLength="96" lengthAdjust="spacingAndGlyphs">ファイル フォルダー</text></svg>
<div class="a" style="left:739.500px;top:461px;width:473.500px;height:22px;background:#cce4f7;border:1px solid #a9d1f0;box-sizing:border-box"></div>
<svg style="left:741px;top:465px;" width="14" height="14" viewBox="0 0 14 14"><rect x="0.600" y="0.600" width="12.800" height="12.800" fill="#fff" stroke="#333" stroke-width="1.100"/><path d="M2.800 7 l3 3 l5.500 -6.500" fill="none" stroke="#222" stroke-width="1.200"/></svg>
<svg style="left:758.5px;top:462.5px;" width="16" height="18.5" viewBox="0 0 16 18.5"><path d="M0.500 0.500 h11 l4 4 v13.500 h-15z" fill="#f4f7fb" stroke="#1d3f7a" stroke-width="1"/><path d="M0.500 13.500 h15 v4.500 h-15z" fill="#163a78"/><path d="M3.600 3 h4.300 a3 3 0 0 1 1.300 5.600 l2.600 4.400 h-2.700 l-2.300 -4 h-0.900 v4 h-2.300z M5.900 4.900 v2.200 h1.600 a1.100 1.100 0 0 0 0 -2.200z" fill="#1a56a0" fill-rule="evenodd"/><path d="M3.500 15 h2 v1.500 h-2z M6.500 15 h2 v1.500 h-2z M9.500 15 h2 v1.500 h-2z" fill="#cfdcf0"/></svg>
<svg style="left:0;top:0" width="1" height="1"><text x="778.3" y="478.1" font-size="12.7" fill="#222" textLength="70" lengthAdjust="spacingAndGlyphs">ドア-開口部</text></svg>
<svg style="left:0;top:0" width="1" height="1"><text x="1071" y="478.2" font-size="13.2" fill="#222" textLength="136.5" lengthAdjust="spacingAndGlyphs">Autodesk Revit ファミリ</text></svg>
<svg style="left:0;top:0" width="1" height="1"><text x="784" y="756.8" font-size="12.7" fill="#111" textLength="76" lengthAdjust="spacingAndGlyphs">ファイル名(N):</text></svg>
<div class="a" style="left:865px;top:741.500px;width:469.500px;height:19px;background:#ffffff;border:1px solid #b4b4b4;box-sizing:border-box"></div>
<svg style="left:0;top:0" width="1" height="1"><text x="870" y="755.6" font-size="12.7" fill="#111" textLength="89" lengthAdjust="spacingAndGlyphs">ドア-開口部.rfa</text></svg>
<svg style="left:1319.5px;top:749.5px;" width="9" height="6" viewBox="0 0 9 6"><path d="M0.800 0.800 l3.700 3.700 l3.700 -3.700" fill="none" stroke="#555" stroke-width="1.100"/></svg>
<svg style="left:0;top:0" width="1" height="1"><text x="758.3" y="784.1" font-size="12.7" fill="#111" textLength="101.7" lengthAdjust="spacingAndGlyphs">ファイルの種類(T):</text></svg>
<div class="a" style="left:865px;top:768px;width:469.500px;height:19px;background:#e1e1e1;border:1px solid #cfcfcf;box-sizing:border-box"></div>
<svg style="left:0;top:0" width="1" height="1"><text x="868.3" y="782.5" font-size="12.7" fill="#111" textLength="190" lengthAdjust="spacingAndGlyphs">全サポートファイル（*.rfa, *.adsk）</text></svg>
<svg style="left:1319.5px;top:776px;" width="9" height="6" viewBox="0 0 9 6"><path d="M0.800 0.800 l3.700 3.700 l3.700 -3.700" fill="none" stroke="#555" stroke-width="1.100"/></svg>
<div class="a" style="left:592.3px;top:802.3px;width:112px;height:23.5px;background:#e1e1e1;border:1px solid #c2c2c2;box-sizing:border-box"></div>
<svg style="left:0;top:0" width="1" height="1"><text x="612.7" y="817.3" font-size="12.7" fill="#111" textLength="51.3" lengthAdjust="spacingAndGlyphs">ツール(L)</text></svg>
<svg style="left:689.5px;top:811px;" width="9.5" height="5.5" viewBox="0 0 9.5 5.5"><path d="M0 0 h9.500 l-4.750 5.500z" fill="#111"/></svg>
<div class="a" style="left:1278.3px;top:802.3px;width:121px;height:23.5px;background:#e1e1e1;border:1px solid #c2c2c2;box-sizing:border-box"></div>
<svg style="left:0;top:0" width="1" height="1"><text x="1318.3" y="818.1" font-size="12.7" fill="#111" textLength="41" lengthAdjust="spacingAndGlyphs">開く(O)</text></svg>
<div class="a" style="left:1418.3px;top:802.3px;width:122px;height:23.5px;background:#e1e1e1;border:1px solid #c2c2c2;box-sizing:border-box"></div>
<svg style="left:0;top:0" width="1" height="1"><text x="1441.7" y="818.1" font-size="12.7" fill="#111" textLength="75" lengthAdjust="spacingAndGlyphs">キャンセル(C)</text></svg>
<svg style="left:1543px;top:829px;" width="10" height="10" viewBox="0 0 10 10"><g fill="#b9b9b9"><rect x="7" y="1" width="2" height="2"/><rect x="4" y="4" width="2" height="2"/><rect x="7" y="4" width="2" height="2"/><rect x="1" y="7" width="2" height="2"/><rect x="4" y="7" width="2" height="2"/><rect x="7" y="7" width="2" height="2"/></g></svg>
<div class="a" style="left:1342px;top:376.500px;width:199px;height:179.500px;border:1px solid #e3e3e3;box-sizing:border-box"></div>
<div class="a" style="left:1345px;top:370px;width:56px;height:14px;background:#f0f0f0;"></div>
<svg style="left:0;top:0" width="1" height="1"><text x="1346.6" y="382.1" font-size="12.7" fill="#111" textLength="52.5" lengthAdjust="spacingAndGlyphs">プレビュー</text></svg>
<div class="a" style="left:1357px;top:389px;width:155.5px;height:155.5px;background:#ffffff;"></div>
<svg style="left:1357px;top:389px;" width="155.5" height="155.5" viewBox="0 0 155.5 155.5"><g fill="none" stroke="#111" stroke-linejoin="miter"><path d="M6.300 12.500 L148.700 20.800 L148.700 144 L6.300 135z" stroke-width="1"/><path d="M6.300 12.300 L149 20.600" stroke-width="2"/><path d="M148.700 21 V143.500 M146.300 20.800 V143.800" stroke-width="0.800"/><path d="M62.800 138.600 V57 L91.500 59.700 V140.400" stroke-width="1"/><path d="M65 138.800 V58.400 L91.500 60.600" stroke-width="0.900"/><path d="M40 137.400 l52 3.200 M120 142.400 l28 1.800" stroke-width="1.800"/></g></svg>
<div class="a" style="left:503.5px;top:29.5px;width:77px;height:42.5px;border:9px solid #fa1708;border-radius:11px;box-sizing:border-box"></div>
<div class="a" style="left:1080px;top:53.5px;width:76.5px;height:117px;border:9px solid #fa1708;border-radius:11px;box-sizing:border-box"></div>
<div class="a" style="left:727px;top:447.8px;width:505.5px;height:50px;border:9px solid #fa1708;border-radius:11px;box-sizing:border-box"></div>
<div class="t" style="left:733px;top:510px;font-size:59px;letter-spacing:1.800px;color:#f40a0a;font-weight:bold;">個別で作ったファミリ</div>
</body></html>
